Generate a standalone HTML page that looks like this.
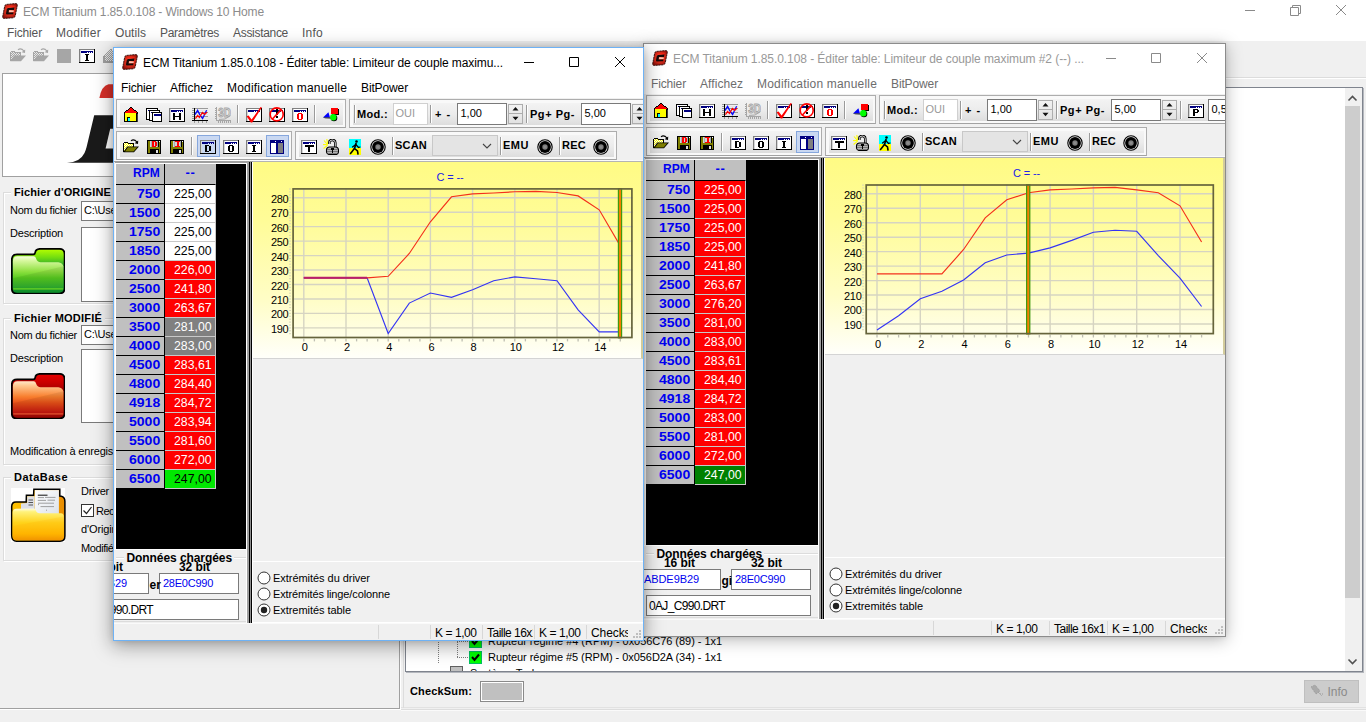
<!DOCTYPE html>
<html><head><meta charset="utf-8"><title>ECM Titanium</title>
<style>
html,body{margin:0;padding:0;}
body{width:1366px;height:722px;overflow:hidden;background:#f0f0f0;position:relative;font-family:"Liberation Sans",sans-serif;font-size:11px;color:#000;}
div,span,svg{position:absolute;box-sizing:border-box;}
span{white-space:nowrap;}
.win{overflow:hidden;background:#f0f0f0;}
.edit{background:#fff;border:1px solid #7a7a7a;}
.tb{border:1px solid #adadad;border-bottom-color:#a2a2a2;background:#f9f9f9;}
.tb:before{content:"";position:absolute;left:3px;top:3px;right:2px;bottom:2px;background:linear-gradient(#f3f3f3,#ececec 50%,#dddddd);}
.sep{width:2px;border-left:1px solid #9a9a9a;border-right:1px solid #fff;}
.grp{border:1px solid #dcdcdc;box-shadow:inset 1px 1px 0 #fff, 1px 1px 0 #fff;}
.hl{background:#c9d8f2;border:1px solid #86a7dd;}
</style></head><body>
<div style="left:0px;top:0px;width:1366px;height:41px;background:#fff;"></div><svg style="left:2px;top:2.5px;" width="16" height="16" viewBox="0 0 16 16" shape-rendering="crispEdges"><g shape-rendering="auto"><defs><radialGradient id="ag" cx="0.5" cy="0.45" r="0.6"><stop offset="0" stop-color="#ff9070"/><stop offset="0.45" stop-color="#e8301c"/><stop offset="1" stop-color="#8a120c"/></radialGradient></defs><path d="M4.6,1.4 L13.6,0.6 Q15.8,0.6 15.3,2.6 L13.2,12.8 Q12.8,14.6 11,14.8 L2.4,15.4 Q0.2,15.5 0.7,13.4 L2.7,3.2 Q3.1,1.5 4.6,1.4 Z" fill="url(#ag)" stroke="#2a0806" stroke-width="0.9" stroke-dasharray="2.2 0.6"/><path d="M12.4,4.6 L6.2,4.9 Q4.9,5 4.7,6.2 L4,10.2 Q3.8,11.6 5.2,11.6 L11.2,11.3 L11.5,9.4 L6.6,9.6 L7,7.1 L12,6.9 Z" fill="#140a0a"/><path d="M7.3,7.6 L11.8,7.4 L11.6,8.9 L7.1,9.1 Z" fill="#ffd8c8" opacity="0.85"/><path d="M5.4,3.9 L12.6,3.5" stroke="#ff2010" stroke-width="0.8"/></g></svg><span style="left:23px;top:3.5px;font-size:12px;line-height:16px;color:#8c8c8c;letter-spacing:-0.141px;">ECM Titanium 1.85.0.108 - Windows 10 Home</span><svg style="left:1240px;top:0" width="126" height="22" viewBox="0 0 126 22" fill="none" stroke="#8a8a8a" stroke-width="1"><path d="M5 10.5 H15"/><path d="M50.5 7.5 H58.5 V15.5 H50.5 Z M52.5 7.5 V5.5 H60.5 V13.5 H58.5"/><path d="M96 5 L106 15 M106 5 L96 15"/></svg><span style="left:7px;top:24.5px;font-size:12px;line-height:16px;color:#555;letter-spacing:-0.144px;">Fichier</span><span style="left:56px;top:24.5px;font-size:12px;line-height:16px;color:#555;letter-spacing:0.290px;">Modifier</span><span style="left:115px;top:24.5px;font-size:12px;line-height:16px;color:#555;letter-spacing:0.054px;">Outils</span><span style="left:160px;top:24.5px;font-size:12px;line-height:16px;color:#555;letter-spacing:-0.302px;">Paramètres</span><span style="left:233px;top:24.5px;font-size:12px;line-height:16px;color:#555;letter-spacing:-0.303px;">Assistance</span><span style="left:302px;top:24.5px;font-size:12px;line-height:16px;color:#555;letter-spacing:0.246px;">Info</span><svg style="left:10px;top:48px;" width="16" height="16" viewBox="0 0 16 16" shape-rendering="crispEdges"><polygon points="0,4 1,3 4,3 5,4 11,4 11,8 1,13 0,13" fill="#a6a6a6"/><polygon points="1,4 4,4 5,5 10,5 10,8 1,12" fill="#a6a6a6"/><rect x="1" y="4" width="1" height="1" fill="#e8e8e8"/><rect x="3" y="4" width="1" height="1" fill="#e8e8e8"/><rect x="2" y="5" width="1" height="1" fill="#e8e8e8"/><rect x="4" y="5" width="1" height="1" fill="#e8e8e8"/><rect x="6" y="5" width="1" height="1" fill="#e8e8e8"/><rect x="8" y="5" width="1" height="1" fill="#e8e8e8"/><rect x="1" y="6" width="1" height="1" fill="#e8e8e8"/><rect x="3" y="6" width="1" height="1" fill="#e8e8e8"/><rect x="5" y="6" width="1" height="1" fill="#e8e8e8"/><rect x="7" y="6" width="1" height="1" fill="#e8e8e8"/><rect x="9" y="6" width="1" height="1" fill="#e8e8e8"/><rect x="2" y="7" width="1" height="1" fill="#e8e8e8"/><rect x="4" y="7" width="1" height="1" fill="#e8e8e8"/><rect x="6" y="7" width="1" height="1" fill="#e8e8e8"/><rect x="8" y="7" width="1" height="1" fill="#e8e8e8"/><rect x="1" y="8" width="1" height="1" fill="#e8e8e8"/><rect x="3" y="8" width="1" height="1" fill="#e8e8e8"/><rect x="5" y="8" width="1" height="1" fill="#e8e8e8"/><rect x="7" y="8" width="1" height="1" fill="#e8e8e8"/><rect x="2" y="9" width="1" height="1" fill="#e8e8e8"/><rect x="4" y="9" width="1" height="1" fill="#e8e8e8"/><rect x="1" y="10" width="1" height="1" fill="#e8e8e8"/><rect x="3" y="10" width="1" height="1" fill="#e8e8e8"/><rect x="2" y="11" width="1" height="1" fill="#e8e8e8"/><polygon shape-rendering="auto" points="0.3,13.2 4.2,7.4 16,7.4 11,13.2" fill="#a6a6a6"/><polygon shape-rendering="auto" points="2,12.4 4.9,8.3 14.2,8.3 10.6,12.4" fill="#a6a6a6"/><path shape-rendering="auto" d="M8,1.8 Q10.8,-0.6 14,3" fill="none" stroke="#a6a6a6" stroke-width="1.1"/><polygon points="15.2,1.4 15,5 11.6,4.2" fill="#a6a6a6" shape-rendering="auto"/></svg><svg style="left:33px;top:48px;" width="16" height="16" viewBox="0 0 16 16" shape-rendering="crispEdges"><polygon points="0,4 1,3 4,3 5,4 11,4 11,8 1,13 0,13" fill="#a6a6a6"/><polygon points="1,4 4,4 5,5 10,5 10,8 1,12" fill="#a6a6a6"/><rect x="1" y="4" width="1" height="1" fill="#e8e8e8"/><rect x="3" y="4" width="1" height="1" fill="#e8e8e8"/><rect x="2" y="5" width="1" height="1" fill="#e8e8e8"/><rect x="4" y="5" width="1" height="1" fill="#e8e8e8"/><rect x="6" y="5" width="1" height="1" fill="#e8e8e8"/><rect x="8" y="5" width="1" height="1" fill="#e8e8e8"/><rect x="1" y="6" width="1" height="1" fill="#e8e8e8"/><rect x="3" y="6" width="1" height="1" fill="#e8e8e8"/><rect x="5" y="6" width="1" height="1" fill="#e8e8e8"/><rect x="7" y="6" width="1" height="1" fill="#e8e8e8"/><rect x="9" y="6" width="1" height="1" fill="#e8e8e8"/><rect x="2" y="7" width="1" height="1" fill="#e8e8e8"/><rect x="4" y="7" width="1" height="1" fill="#e8e8e8"/><rect x="6" y="7" width="1" height="1" fill="#e8e8e8"/><rect x="8" y="7" width="1" height="1" fill="#e8e8e8"/><rect x="1" y="8" width="1" height="1" fill="#e8e8e8"/><rect x="3" y="8" width="1" height="1" fill="#e8e8e8"/><rect x="5" y="8" width="1" height="1" fill="#e8e8e8"/><rect x="7" y="8" width="1" height="1" fill="#e8e8e8"/><rect x="2" y="9" width="1" height="1" fill="#e8e8e8"/><rect x="4" y="9" width="1" height="1" fill="#e8e8e8"/><rect x="1" y="10" width="1" height="1" fill="#e8e8e8"/><rect x="3" y="10" width="1" height="1" fill="#e8e8e8"/><rect x="2" y="11" width="1" height="1" fill="#e8e8e8"/><polygon shape-rendering="auto" points="0.3,13.2 4.2,7.4 16,7.4 11,13.2" fill="#a6a6a6"/><polygon shape-rendering="auto" points="2,12.4 4.9,8.3 14.2,8.3 10.6,12.4" fill="#a6a6a6"/><path shape-rendering="auto" d="M8,1.8 Q10.8,-0.6 14,3" fill="none" stroke="#a6a6a6" stroke-width="1.1"/><polygon points="15.2,1.4 15,5 11.6,4.2" fill="#a6a6a6" shape-rendering="auto"/></svg><div style="left:57px;top:49px;width:14px;height:14px;background:#a6a6a6;"></div><svg style="left:79px;top:48px;" width="16" height="16" viewBox="0 0 16 16" shape-rendering="crispEdges"><rect x="0" y="1" width="16" height="14" fill="#808080"/><rect x="15" y="1" width="1" height="14" fill="#000"/><rect x="0" y="14" width="16" height="1" fill="#000"/><rect x="1" y="2" width="14" height="12" fill="#fff"/><rect x="1" y="2" width="1" height="12" fill="#d8d8d8"/><rect x="2" y="3" width="12" height="2" fill="#000080"/><rect x="8" y="4" width="1" height="1" fill="#fff"/><rect x="10" y="4" width="1" height="1" fill="#fff"/><rect x="12" y="4" width="1" height="1" fill="#fff"/><rect x="6" y="6" width="4" height="1" fill="#000"/><rect x="7" y="6" width="2" height="7" fill="#000"/><rect x="6" y="12" width="4" height="1" fill="#000"/></svg><svg style="left:102px;top:48px;" width="16" height="16" viewBox="0 0 16 16" shape-rendering="crispEdges"><polygon points="2,8 9,0 16,8" fill="#a0a0a0"/><rect x="1" y="8" width="15" height="7" fill="#a0a0a0"/><rect x="8" y="2" width="1" height="1" fill="#e8e8e8"/><rect x="10" y="2" width="1" height="1" fill="#e8e8e8"/><rect x="7" y="3" width="1" height="1" fill="#e8e8e8"/><rect x="9" y="3" width="1" height="1" fill="#e8e8e8"/><rect x="11" y="3" width="1" height="1" fill="#e8e8e8"/><rect x="6" y="4" width="1" height="1" fill="#e8e8e8"/><rect x="8" y="4" width="1" height="1" fill="#e8e8e8"/><rect x="10" y="4" width="1" height="1" fill="#e8e8e8"/><rect x="12" y="4" width="1" height="1" fill="#e8e8e8"/><rect x="5" y="5" width="1" height="1" fill="#e8e8e8"/><rect x="7" y="5" width="1" height="1" fill="#e8e8e8"/><rect x="9" y="5" width="1" height="1" fill="#e8e8e8"/><rect x="11" y="5" width="1" height="1" fill="#e8e8e8"/><rect x="13" y="5" width="1" height="1" fill="#e8e8e8"/><rect x="4" y="6" width="1" height="1" fill="#e8e8e8"/><rect x="6" y="6" width="1" height="1" fill="#e8e8e8"/><rect x="8" y="6" width="1" height="1" fill="#e8e8e8"/><rect x="10" y="6" width="1" height="1" fill="#e8e8e8"/><rect x="12" y="6" width="1" height="1" fill="#e8e8e8"/><rect x="14" y="6" width="1" height="1" fill="#e8e8e8"/><rect x="3" y="7" width="1" height="1" fill="#e8e8e8"/><rect x="5" y="7" width="1" height="1" fill="#e8e8e8"/><rect x="7" y="7" width="1" height="1" fill="#e8e8e8"/><rect x="9" y="7" width="1" height="1" fill="#e8e8e8"/><rect x="11" y="7" width="1" height="1" fill="#e8e8e8"/><rect x="13" y="7" width="1" height="1" fill="#e8e8e8"/><rect x="4" y="8" width="1" height="1" fill="#e8e8e8"/><rect x="6" y="8" width="1" height="1" fill="#e8e8e8"/><rect x="8" y="8" width="1" height="1" fill="#e8e8e8"/><rect x="10" y="8" width="1" height="1" fill="#e8e8e8"/><rect x="12" y="8" width="1" height="1" fill="#e8e8e8"/><rect x="14" y="8" width="1" height="1" fill="#e8e8e8"/><rect x="3" y="9" width="1" height="1" fill="#e8e8e8"/><rect x="5" y="9" width="1" height="1" fill="#e8e8e8"/><rect x="7" y="9" width="1" height="1" fill="#e8e8e8"/><rect x="9" y="9" width="1" height="1" fill="#e8e8e8"/><rect x="11" y="9" width="1" height="1" fill="#e8e8e8"/><rect x="13" y="9" width="1" height="1" fill="#e8e8e8"/><rect x="4" y="10" width="1" height="1" fill="#e8e8e8"/><rect x="6" y="10" width="1" height="1" fill="#e8e8e8"/><rect x="8" y="10" width="1" height="1" fill="#e8e8e8"/><rect x="10" y="10" width="1" height="1" fill="#e8e8e8"/><rect x="12" y="10" width="1" height="1" fill="#e8e8e8"/><rect x="14" y="10" width="1" height="1" fill="#e8e8e8"/><rect x="3" y="11" width="1" height="1" fill="#e8e8e8"/><rect x="5" y="11" width="1" height="1" fill="#e8e8e8"/><rect x="7" y="11" width="1" height="1" fill="#e8e8e8"/><rect x="9" y="11" width="1" height="1" fill="#e8e8e8"/><rect x="11" y="11" width="1" height="1" fill="#e8e8e8"/><rect x="13" y="11" width="1" height="1" fill="#e8e8e8"/><rect x="4" y="12" width="1" height="1" fill="#e8e8e8"/><rect x="6" y="12" width="1" height="1" fill="#e8e8e8"/><rect x="8" y="12" width="1" height="1" fill="#e8e8e8"/><rect x="10" y="12" width="1" height="1" fill="#e8e8e8"/><rect x="12" y="12" width="1" height="1" fill="#e8e8e8"/><rect x="14" y="12" width="1" height="1" fill="#e8e8e8"/></svg><div style="left:2px;top:73px;width:420px;height:104px;background:#fff;border:1px solid #a0a0a0;border-right:none;"></div><svg style="left:60px;top:76px" width="60" height="100" viewBox="60 76 60 100"><path d="M99.4 98 Q101.5 86 108.5 84.3 L116 84.3 L116 98 Z" fill="#d8302a"/><path d="M67 162.7 Q80 162.4 84.5 153 Q86 149.5 86.6 147 L94.2 115.3 L116 115.3 L116 162.7 Z" fill="#1a1a1a"/><path d="M110.2 128.7 L116 128.7 L116 148.6 L105.6 148.6 Z" fill="#fff"/></svg><div class="grp" style="left:3px;top:192px;width:200px;height:112px;"></div><div style="left:11px;top:186px;width:103px;height:13px;background:#f0f0f0;"></div><span style="left:14px;top:185.0px;font-size:11px;line-height:15px;color:#000;letter-spacing:0.123px;font-weight:bold;">Fichier d&#x27;ORIGINE</span><span style="left:10px;top:203.0px;font-size:11px;line-height:15px;color:#000;letter-spacing:-0.280px;">Nom du fichier</span><div class="edit" style="left:81px;top:201px;width:120px;height:20px;"><span style="left:2px;top:1.0px;font-size:11px;line-height:15px;color:#000;letter-spacing:-0.2px;">C:\Users\</span></div><span style="left:10px;top:226.0px;font-size:11px;line-height:15px;color:#000;letter-spacing:-0.184px;">Description</span><div class="edit" style="left:81px;top:227px;width:120px;height:75px;"></div><div class="grp" style="left:3px;top:318px;width:200px;height:147px;"></div><div style="left:11px;top:312px;width:94px;height:13px;background:#f0f0f0;"></div><span style="left:14px;top:311.0px;font-size:11px;line-height:15px;color:#000;letter-spacing:0.203px;font-weight:bold;">Fichier MODIFIÉ</span><span style="left:10px;top:328.0px;font-size:11px;line-height:15px;color:#000;letter-spacing:-0.280px;">Nom du fichier</span><div class="edit" style="left:81px;top:325px;width:120px;height:20px;"><span style="left:2px;top:1.0px;font-size:11px;line-height:15px;color:#000;letter-spacing:-0.2px;">C:\Users\</span></div><span style="left:10px;top:351.0px;font-size:11px;line-height:15px;color:#000;letter-spacing:-0.184px;">Description</span><div class="edit" style="left:81px;top:349px;width:120px;height:74px;"></div><span style="left:10px;top:444.0px;font-size:11px;line-height:15px;color:#000;letter-spacing:-0.173px;">Modification à enregistrer</span><div class="grp" style="left:3px;top:477px;width:200px;height:84px;"></div><div style="left:11px;top:471px;width:60px;height:13px;background:#f0f0f0;"></div><span style="left:14px;top:470.0px;font-size:11px;line-height:15px;color:#000;letter-spacing:0.483px;font-weight:bold;">DataBase</span><span style="left:81px;top:484.0px;font-size:11px;line-height:15px;color:#000;letter-spacing:-0.222px;">Driver</span><div style="left:81px;top:504px;width:13px;height:13px;background:#fff;border:1px solid #333;"><svg style="left:0;top:0" width="11" height="11" viewBox="0 0 11 11"><path d="M1.5 5.5 L4.5 8.5 L9.5 2" fill="none" stroke="#222" stroke-width="1.2"/></svg></div><span style="left:96px;top:504.0px;font-size:11px;line-height:15px;color:#000;letter-spacing:-0.486px;">Rechercher</span><span style="left:81px;top:522.0px;font-size:11px;line-height:15px;color:#000;letter-spacing:-0.131px;">d&#x27;Origine</span><span style="left:81px;top:541.0px;font-size:11px;line-height:15px;color:#000;letter-spacing:-0.423px;">Modifié</span><svg style="left:11px;top:247.5px" width="54.4" height="46.4" viewBox="0 0 54 46"><defs><linearGradient id="fga" x1="0" y1="0" x2="0" y2="1"><stop offset="0" stop-color="#f6ffe0"/><stop offset="0.12" stop-color="#d8f8a0"/><stop offset="0.42" stop-color="#8ee040"/><stop offset="0.6" stop-color="#58cc20"/><stop offset="0.86" stop-color="#30b030"/><stop offset="0.9" stop-color="#18a030"/><stop offset="1" stop-color="#10982c"/></linearGradient><linearGradient id="fgb" x1="0" y1="0" x2="0" y2="1"><stop offset="0" stop-color="#b8ff00"/><stop offset="0.2" stop-color="#70dc10"/><stop offset="0.45" stop-color="#109040"/><stop offset="1" stop-color="#0c8030"/></linearGradient></defs><path d="M24 4.5 Q24.5 0.8 29 0.8 L48 0.8 Q53.2 0.8 53.2 6 L53.2 40 Q53.2 45.2 48 45.2 L6 45.2 Q0.8 45.2 0.8 40 L0.8 11.5 Q0.8 6.3 6 6.3 L22 6.3 Q23.8 6.3 24 4.5 Z" fill="url(#fgb)" stroke="#000" stroke-width="1.7"/><path d="M1.9 13 Q1.9 8.2 6.5 8.2 L22.5 8.2 Q24.3 8.2 25 10.6 Q26 14 29.5 14 L47 14 Q51 14.4 52.1 18 L52.1 39.5 Q52.1 44.1 47.5 44.1 L6.5 44.1 Q1.9 44.1 1.9 39.5 Z" fill="url(#fga)"/><path d="M1.9 30 L52.1 18 L52.1 39.5 Q52.1 44.1 47.5 44.1 L6.5 44.1 Q1.9 44.1 1.9 39.5 Z" fill="#000" opacity="0.07"/><path d="M2.2 40.6 L51.8 40.6" stroke="#90f020" stroke-width="0.9"/></svg><svg style="left:11px;top:372.5px" width="54.4" height="46.4" viewBox="0 0 54 46"><defs><linearGradient id="fra" x1="0" y1="0" x2="0" y2="1"><stop offset="0" stop-color="#ffe8c8"/><stop offset="0.12" stop-color="#ffc890"/><stop offset="0.42" stop-color="#f88030"/><stop offset="0.6" stop-color="#e85018"/><stop offset="0.86" stop-color="#c81810"/><stop offset="0.9" stop-color="#b00c08"/><stop offset="1" stop-color="#a00806"/></linearGradient><linearGradient id="frb" x1="0" y1="0" x2="0" y2="1"><stop offset="0" stop-color="#e80000"/><stop offset="0.2" stop-color="#c80000"/><stop offset="0.45" stop-color="#900000"/><stop offset="1" stop-color="#800000"/></linearGradient></defs><path d="M24 4.5 Q24.5 0.8 29 0.8 L48 0.8 Q53.2 0.8 53.2 6 L53.2 40 Q53.2 45.2 48 45.2 L6 45.2 Q0.8 45.2 0.8 40 L0.8 11.5 Q0.8 6.3 6 6.3 L22 6.3 Q23.8 6.3 24 4.5 Z" fill="url(#frb)" stroke="#000" stroke-width="1.7"/><path d="M1.9 13 Q1.9 8.2 6.5 8.2 L22.5 8.2 Q24.3 8.2 25 10.6 Q26 14 29.5 14 L47 14 Q51 14.4 52.1 18 L52.1 39.5 Q52.1 44.1 47.5 44.1 L6.5 44.1 Q1.9 44.1 1.9 39.5 Z" fill="url(#fra)"/><path d="M1.9 30 L52.1 18 L52.1 39.5 Q52.1 44.1 47.5 44.1 L6.5 44.1 Q1.9 44.1 1.9 39.5 Z" fill="#000" opacity="0.07"/><path d="M2.2 40.6 L51.8 40.6" stroke="#ff7040" stroke-width="0.9"/></svg><div style="left:11px;top:488px;width:54px;height:54px;background:#fff;"></div><svg style="left:8px;top:484px" width="60" height="62" viewBox="8 484 60 62"><defs><linearGradient id="fya" x1="0" y1="0" x2="0" y2="1"><stop offset="0" stop-color="#fffde0"/><stop offset="0.1" stop-color="#fff27a"/><stop offset="0.45" stop-color="#ffd21a"/><stop offset="0.8" stop-color="#ffb800"/><stop offset="1" stop-color="#f09400"/></linearGradient><linearGradient id="fyb" x1="0" y1="0" x2="1" y2="0"><stop offset="0" stop-color="#ffc400"/><stop offset="1" stop-color="#e88c00"/></linearGradient><linearGradient id="fyp" x1="0" y1="0" x2="1" y2="1"><stop offset="0" stop-color="#ffffff"/><stop offset="1" stop-color="#dde2ea"/></linearGradient></defs><path d="M11.7 535.5 L11.7 506.5 Q11.7 501.9 16 501.9 L26.2 501.9 L26.4 495.3 L33.6 495.3 L33.9 489.2 L59.8 489.2 L59.8 496 L61.3 496.2 Q64.9 497 64.9 501.5 L64.9 536 Q64.9 541.2 60 541.2 L16.5 541.2 Q11.7 541.2 11.7 535.5 Z" fill="url(#fyb)" stroke="#000" stroke-width="1.5"/><path d="M27.2 496.2 L34.6 496.2 L34.6 510 L21 510 L21 503.5 L27.2 503 Z" fill="#dcdfe6"/><path d="M28.5 500 H33 M28.5 502.5 H33 M28.5 505 H33" stroke="#555" stroke-width="1"/><path d="M34.8 490.1 L58.9 490.1 L58.9 514 L34.8 514 Z" fill="url(#fyp)"/><path d="M37.8 495.2 H47.5" stroke="#222" stroke-width="1.1"/><path d="M37.8 497.6 H44 M45 497.4 H55.5 M37.8 500.4 H46 M47.5 500.2 H55 M38 503.2 H54 M38 504.6 H39 M40.5 506.6 H54 M46 510.2 H47" stroke="#8a8a8a" stroke-width="0.8"/><path d="M12.6 512.8 Q12.6 508.8 16.5 508.8 L33.8 508.6 Q35.6 508.8 36 510.6 Q36.6 513.2 39.5 513.2 L61 513.2 Q63.9 513.6 63.9 516.5 L63.9 536 Q63.9 540.2 60 540.2 L16.5 540.2 Q12.6 540.2 12.6 536 Z" fill="url(#fya)"/><path d="M12.6 526 L63.9 516.5 L63.9 536 Q63.9 540.2 60 540.2 L16.5 540.2 Q12.6 540.2 12.6 536 Z" fill="#ff9c00" opacity="0.13"/></svg><div style="left:399px;top:77px;width:967px;height:1px;background:#dcdcdc;"></div><div style="left:399px;top:78px;width:967px;height:1px;background:#fff;"></div><div style="left:405px;top:87px;width:958px;height:585px;background:#fff;border:1px solid #7f848e;box-shadow:1px 1px 0 #b4b7bd;"></div><div style="left:1345px;top:88px;width:17px;height:583px;background:#f0f0f0;"></div><div style="left:1345px;top:106px;width:15px;height:492px;background:#cdcdcd;"></div><svg style="left:1344px;top:89.5px" width="17" height="17" viewBox="0 0 17 17"><path d="M4.5 10.5 L8.5 6.5 L12.5 10.5" fill="none" stroke="#505050" stroke-width="1.6"/></svg><svg style="left:1344px;top:653px" width="17" height="17" viewBox="0 0 17 17"><path d="M4.5 6.5 L8.5 10.5 L12.5 6.5" fill="none" stroke="#505050" stroke-width="1.6"/></svg><div style="left:438px;top:640px;width:1px;height:24px;background-image:repeating-linear-gradient(to bottom,#808080 0 1px,transparent 1px 2px);"></div><div style="left:457px;top:640px;width:1px;height:17px;background-image:repeating-linear-gradient(to bottom,#808080 0 1px,transparent 1px 2px);"></div><div style="left:457px;top:641px;width:11px;height:1px;background-image:repeating-linear-gradient(to right,#808080 0 1px,transparent 1px 2px);"></div><div style="left:457px;top:657px;width:11px;height:1px;background-image:repeating-linear-gradient(to right,#808080 0 1px,transparent 1px 2px);"></div><div style="left:469px;top:634.5px;width:13px;height:13px;background:#0f0;border:1px solid #00c060;"><svg style="left:0;top:0" width="11" height="11" viewBox="0 0 11 11"><path d="M2 5 L4.5 8 L9 2.5" fill="none" stroke="#000" stroke-width="2"/></svg></div><div style="left:469px;top:650.5px;width:13px;height:13px;background:#0f0;border:1px solid #00c060;"><svg style="left:0;top:0" width="11" height="11" viewBox="0 0 11 11"><path d="M2 5 L4.5 8 L9 2.5" fill="none" stroke="#000" stroke-width="2"/></svg></div><span style="left:488px;top:634.0px;font-size:11px;line-height:15px;color:#000;letter-spacing:-0.044px;">Rupteur régime #4 (RPM) - 0x056C76 (89) - 1x1</span><span style="left:488px;top:650.0px;font-size:11px;line-height:15px;color:#000;letter-spacing:-0.058px;">Rupteur régime #5 (RPM) - 0x056D2A (34) - 1x1</span><div style="left:450px;top:666px;width:13px;height:5px;background:#c0c0c0;border:1px solid #606060;border-bottom:none;"></div><div style="left:470px;top:666px;width:100px;height:5px;overflow:hidden;"><span style="left:0px;top:-0.5px;font-size:11px;line-height:15px;color:#000;">Système Turbo</span></div><span style="left:410px;top:684.0px;font-size:11px;line-height:15px;color:#000;letter-spacing:0.165px;font-weight:bold;">CheckSum:</span><div style="left:480px;top:681px;width:44px;height:21px;background:#c0c0c0;border:1px solid #8a8a8a;box-shadow:inset 0 0 0 1px #fff;"></div><div style="left:1304px;top:680px;width:55px;height:23px;background:#cccccc;border:1px solid #bfbfbf;"></div><span style="left:1327.5px;top:684.0px;font-size:12px;line-height:16px;color:#8a8a8a;letter-spacing:-0.004px;">Info</span><svg style="left:1308px;top:683px" width="18" height="16" viewBox="0 0 18 16"><path d="M3 4 L7 2 L12 8 L8 11 Z M10 9 L14 13 M12 11 L16 11" fill="#aaa" stroke="#999" stroke-width="1" stroke-dasharray="1 1"/></svg><div style="left:401px;top:707px;width:965px;height:1px;background:#e2e2e2;"></div><div style="left:401px;top:709px;width:965px;height:1px;background:#dddddd;"></div><div style="left:401px;top:710px;width:965px;height:1px;background:#fafafa;"></div><div style="left:0px;top:708px;width:400px;height:1px;background:#a0a0a0;"></div><div style="left:0px;top:709px;width:401px;height:1px;background:#fff;"></div><div style="left:399px;top:78px;width:1px;height:631px;background:#a0a0a0;"></div><div style="left:400px;top:78px;width:1px;height:631px;background:#fff;"></div><div style="left:403px;top:82px;width:1px;height:626px;background:#dcdcdc;"></div><div style="left:643px;top:43px;width:583px;height:594px;box-shadow:0 3px 16px 0 rgba(0,0,0,0.28), 0 0 5px rgba(0,0,0,0.10);"></div><div class="win" style="left:643px;top:43px;width:583px;height:594px;border:1px solid #8c8c8c;"><div style="left:-114px;top:-48px;width:1400px;height:800px;"><div style="left:113px;top:47px;width:582px;height:51px;background:#fff;"></div><svg style="left:122px;top:54px;" width="16" height="16" viewBox="0 0 16 16" shape-rendering="crispEdges"><g shape-rendering="auto"><defs><radialGradient id="ag643" cx="0.5" cy="0.45" r="0.6"><stop offset="0" stop-color="#ff9070"/><stop offset="0.45" stop-color="#e8301c"/><stop offset="1" stop-color="#8a120c"/></radialGradient></defs><path d="M4.6,1.4 L13.6,0.6 Q15.8,0.6 15.3,2.6 L13.2,12.8 Q12.8,14.6 11,14.8 L2.4,15.4 Q0.2,15.5 0.7,13.4 L2.7,3.2 Q3.1,1.5 4.6,1.4 Z" fill="url(#ag643)" stroke="#2a0806" stroke-width="0.9" stroke-dasharray="2.2 0.6"/><path d="M12.4,4.6 L6.2,4.9 Q4.9,5 4.7,6.2 L4,10.2 Q3.8,11.6 5.2,11.6 L11.2,11.3 L11.5,9.4 L6.6,9.6 L7,7.1 L12,6.9 Z" fill="#140a0a"/><path d="M7.3,7.6 L11.8,7.4 L11.6,8.9 L7.1,9.1 Z" fill="#ffd8c8" opacity="0.85"/><path d="M5.4,3.9 L12.6,3.5" stroke="#ff2010" stroke-width="0.8"/></g></svg><span style="left:143px;top:54.5px;font-size:12px;line-height:16px;color:#999;letter-spacing:-0.066px;">ECM Titanium 1.85.0.108 - Éditer table: Limiteur de couple maximum #2 (--) ...</span><svg style="left:576px;top:47px" width="119" height="30" viewBox="0 0 119 30" fill="none" stroke="#8a8a8a" stroke-width="1"><path d="M0 15.5 H10"/><path d="M45.5 10.5 H54.5 V19.5 H45.5 Z"/><path d="M91 10 L101 20 M101 10 L91 20"/></svg><span style="left:121px;top:79.5px;font-size:12px;line-height:16px;color:#6d6d6d;letter-spacing:-0.144px;">Fichier</span><span style="left:170px;top:79.5px;font-size:12px;line-height:16px;color:#6d6d6d;letter-spacing:0.066px;">Affichez</span><span style="left:227px;top:79.5px;font-size:12px;line-height:16px;color:#6d6d6d;letter-spacing:0.188px;">Modification manuelle</span><span style="left:361px;top:79.5px;font-size:12px;line-height:16px;color:#6d6d6d;letter-spacing:-0.127px;">BitPower</span><div class="tb" style="left:116px;top:99px;width:230px;height:29px;"></div><div class="tb" style="left:349px;top:99px;width:350px;height:29px;"></div><div class="tb" style="left:116px;top:131px;width:176px;height:29px;"></div><div class="tb" style="left:295px;top:131px;width:322px;height:29px;"></div><svg style="left:123px;top:107px;" width="16" height="16" viewBox="0 0 16 16" shape-rendering="crispEdges"><polygon points="8,0 16,6 0,6" fill="#000"/><polygon points="8,1 14,5.5 2,5.5" fill="#f00"/><rect x="1" y="6" width="14" height="9" fill="#000"/><rect x="2" y="6" width="11" height="8" fill="#ff0"/><rect x="4" y="10" width="3" height="4" fill="#000"/><rect x="5" y="11" width="2" height="3" fill="#0ff"/><rect x="14" y="7" width="1" height="8" fill="#404040"/></svg><svg style="left:146px;top:107px;" width="16" height="16" viewBox="0 0 16 16" shape-rendering="crispEdges"><rect x="0" y="1" width="12" height="12" fill="#000"/><rect x="1" y="2" width="10" height="10" fill="#fff"/><rect x="2" y="3" width="9" height="1" fill="#000080"/><rect x="3" y="3" width="11" height="11" fill="#000"/><rect x="4" y="4" width="9" height="9" fill="#fff"/><rect x="5" y="5" width="8" height="1" fill="#000080"/><rect x="6" y="5" width="10" height="10" fill="#000"/><rect x="7" y="6" width="8" height="8" fill="#fff"/><rect x="8" y="7" width="7" height="2" fill="#000080"/></svg><svg style="left:169px;top:107px;" width="16" height="16" viewBox="0 0 16 16" shape-rendering="crispEdges"><rect x="0" y="1" width="16" height="14" fill="#808080"/><rect x="15" y="1" width="1" height="14" fill="#000"/><rect x="0" y="14" width="16" height="1" fill="#000"/><rect x="1" y="2" width="14" height="12" fill="#fff"/><rect x="1" y="2" width="1" height="12" fill="#d8d8d8"/><rect x="2" y="3" width="12" height="2" fill="#000080"/><rect x="8" y="4" width="1" height="1" fill="#fff"/><rect x="10" y="4" width="1" height="1" fill="#fff"/><rect x="12" y="4" width="1" height="1" fill="#fff"/><rect x="4" y="6" width="2" height="7" fill="#000"/><rect x="10" y="6" width="2" height="7" fill="#000"/><rect x="6" y="9" width="4" height="1" fill="#000"/></svg><svg style="left:192px;top:107px;" width="16" height="16" viewBox="0 0 16 16" shape-rendering="crispEdges"><rect x="0" y="1" width="16" height="1" fill="#9a9a9a"/><rect x="0" y="5" width="16" height="1" fill="#9a9a9a"/><rect x="0" y="9" width="16" height="1" fill="#9a9a9a"/><rect x="0" y="3" width="2" height="1" fill="#9a9a9a"/><rect x="3" y="3" width="13" height="1" fill="#e4e4e4"/><rect x="0" y="7" width="2" height="1" fill="#9a9a9a"/><rect x="3" y="7" width="13" height="1" fill="#e4e4e4"/><rect x="0" y="11" width="2" height="1" fill="#9a9a9a"/><rect x="3" y="11" width="13" height="1" fill="#e4e4e4"/><rect x="2" y="1" width="1" height="13" fill="#000"/><rect x="0" y="13" width="16" height="1" fill="#000"/><rect x="2" y="14" width="1" height="2" fill="#9a9a9a"/><rect x="6" y="14" width="1" height="2" fill="#9a9a9a"/><rect x="10" y="14" width="1" height="2" fill="#9a9a9a"/><rect x="14" y="14" width="1" height="2" fill="#9a9a9a"/><polyline shape-rendering="auto" points="3,7.6 5.6,3.4 7.6,7.4 10.6,11.5 14.6,3.2" fill="none" stroke="#00f" stroke-width="1.25"/><polyline shape-rendering="auto" points="3.4,11.6 5.6,8.4 7.4,10.5 10.4,5.4 12.5,7.4 15,5.2" fill="none" stroke="#f00" stroke-width="1.25"/></svg><svg style="left:215px;top:107px;" width="16" height="16" viewBox="0 0 16 16" shape-rendering="crispEdges"><rect x="1" y="0" width="1" height="14" fill="#a6a6a6"/><rect x="1" y="13" width="15" height="1" fill="#a6a6a6"/><rect x="0" y="1" width="1" height="1" fill="#a6a6a6"/><rect x="0" y="3" width="1" height="1" fill="#a6a6a6"/><rect x="0" y="5" width="1" height="1" fill="#a6a6a6"/><rect x="0" y="7" width="1" height="1" fill="#a6a6a6"/><rect x="0" y="9" width="1" height="1" fill="#a6a6a6"/><rect x="0" y="11" width="1" height="1" fill="#a6a6a6"/><rect x="3" y="14" width="1" height="2" fill="#a6a6a6"/><rect x="5" y="14" width="1" height="2" fill="#a6a6a6"/><rect x="7" y="14" width="1" height="2" fill="#a6a6a6"/><rect x="9" y="14" width="1" height="2" fill="#a6a6a6"/><rect x="11" y="14" width="1" height="2" fill="#a6a6a6"/><rect x="13" y="14" width="1" height="2" fill="#a6a6a6"/><rect x="15" y="14" width="1" height="2" fill="#a6a6a6"/><text shape-rendering="auto" x="3.2" y="10.3" font-family="Liberation Sans" font-size="12.5" font-weight="bold" fill="#e8e8e8" stroke="#a6a6a6" stroke-width="0.95" textLength="12.6" lengthAdjust="spacingAndGlyphs">3D</text><polyline shape-rendering="auto" points="4,12.4 10,12 15.5,8.6" fill="none" stroke="#a6a6a6" stroke-width="1"/></svg><div class="sep" style="left:237px;top:105px;width:2px;height:18px;"></div><svg style="left:246px;top:107px;" width="16" height="16" viewBox="0 0 16 16" shape-rendering="crispEdges"><rect x="0" y="1" width="16" height="14" fill="#808080"/><rect x="15" y="1" width="1" height="14" fill="#000"/><rect x="0" y="14" width="16" height="1" fill="#000"/><rect x="1" y="2" width="14" height="12" fill="#fff"/><rect x="1" y="2" width="1" height="12" fill="#d8d8d8"/><rect x="2" y="3" width="12" height="2" fill="#000080"/><rect x="8" y="4" width="1" height="1" fill="#fff"/><rect x="10" y="4" width="1" height="1" fill="#fff"/><rect x="12" y="4" width="1" height="1" fill="#fff"/><polygon shape-rendering="auto" points="0.6,9.2 2.6,8.4 5.6,12.6 14.6,0 15.9,0.6 6.2,15.6 4.8,15.6" fill="#f00"/></svg><svg style="left:269px;top:107px;" width="16" height="16" viewBox="0 0 16 16" shape-rendering="crispEdges"><rect x="0" y="1" width="16" height="14" fill="#808080"/><rect x="15" y="1" width="1" height="14" fill="#000"/><rect x="0" y="14" width="16" height="1" fill="#000"/><rect x="1" y="2" width="14" height="12" fill="#fff"/><rect x="1" y="2" width="1" height="12" fill="#d8d8d8"/><rect x="2" y="3" width="12" height="2" fill="#000080"/><rect x="8" y="4" width="1" height="1" fill="#fff"/><rect x="10" y="4" width="1" height="1" fill="#fff"/><rect x="12" y="4" width="1" height="1" fill="#fff"/><rect x="7" y="2" width="2" height="6" fill="#000"/><rect x="7" y="9" width="2" height="2" fill="#000"/><circle shape-rendering="auto" cx="7.7" cy="7.4" r="6.5" fill="none" stroke="#f00" stroke-width="1.6"/><line shape-rendering="auto" x1="3.2" y1="12.2" x2="12.2" y2="2.6" stroke="#f00" stroke-width="1.6"/></svg><svg style="left:292px;top:107px;" width="16" height="16" viewBox="0 0 16 16" shape-rendering="crispEdges"><rect x="0" y="1" width="16" height="14" fill="#808080"/><rect x="15" y="1" width="1" height="14" fill="#000"/><rect x="0" y="14" width="16" height="1" fill="#000"/><rect x="1" y="2" width="14" height="12" fill="#fff"/><rect x="1" y="2" width="1" height="12" fill="#d8d8d8"/><rect x="2" y="3" width="12" height="2" fill="#000080"/><rect x="8" y="4" width="1" height="1" fill="#fff"/><rect x="10" y="4" width="1" height="1" fill="#fff"/><rect x="12" y="4" width="1" height="1" fill="#fff"/><rect x="5" y="7" width="2" height="5" fill="#f00"/><rect x="9" y="7" width="2" height="5" fill="#f00"/><rect x="6" y="6" width="4" height="1" fill="#f00"/><rect x="6" y="12" width="4" height="1" fill="#f00"/></svg><div class="sep" style="left:314px;top:105px;width:2px;height:18px;"></div><svg style="left:323px;top:107px;" width="16" height="16" viewBox="0 0 16 16" shape-rendering="crispEdges"><rect x="9" y="2" width="7" height="6" fill="#000"/><rect x="8" y="1" width="7" height="6" fill="#f00"/><polygon shape-rendering="auto" points="0,10.6 5.4,5.2 7,10.6" fill="#00f"/><polygon shape-rendering="auto" points="0,10.6 7,10.6 8,11.6 2,11.2" fill="#000"/><circle shape-rendering="auto" cx="11" cy="11" r="3.3" fill="#000"/><circle shape-rendering="auto" cx="10.3" cy="10.2" r="3.2" fill="#0f0"/></svg><div class="sep" style="left:354px;top:105px;width:2px;height:18px;"></div><span style="left:357px;top:106.5px;font-size:11px;line-height:15px;color:#000;letter-spacing:0.336px;font-weight:bold;">Mod.:</span><div class="edit" style="left:393px;top:103px;width:35px;height:22px;border-color:#d0d0d0;"><span style="left:1.5px;top:1.5px;font-size:11px;line-height:15px;color:#9a9a9a;">OUI</span></div><div class="sep" style="left:430px;top:105px;width:2px;height:18px;"></div><span style="left:435px;top:106.5px;font-size:11px;line-height:15px;color:#000;letter-spacing:0.952px;font-weight:bold;">+ -</span><div class="edit" style="left:457px;top:103px;width:50px;height:22px;"><span style="left:2.5px;top:1.5px;font-size:11px;line-height:15px;color:#000;">1,00</span></div><div style="left:508px;top:104px;width:15px;height:20px;background:linear-gradient(#f2f2f2,#e2e2e2);border:1px solid #adadad;"><div style="left:0;top:8px;width:13px;height:1px;background:#adadad"></div><svg style="left:-1px;top:-1px" width="15" height="20" viewBox="0 0 15 20"><path d="M4.5 6.5 L7.5 3 L10.5 6.5 Z M4.5 12.8 L7.5 16.3 L10.5 12.8 Z" fill="#111"/></svg></div><div class="sep" style="left:526px;top:105px;width:2px;height:18px;"></div><span style="left:530px;top:106.5px;font-size:11px;line-height:15px;color:#000;letter-spacing:0.535px;font-weight:bold;">Pg+ Pg-</span><div class="edit" style="left:581px;top:103px;width:50px;height:22px;"><span style="left:2.5px;top:1.5px;font-size:11px;line-height:15px;color:#000;">5,00</span></div><div style="left:632px;top:104px;width:15px;height:20px;background:linear-gradient(#f2f2f2,#e2e2e2);border:1px solid #adadad;"><div style="left:0;top:8px;width:13px;height:1px;background:#adadad"></div><svg style="left:-1px;top:-1px" width="15" height="20" viewBox="0 0 15 20"><path d="M4.5 6.5 L7.5 3 L10.5 6.5 Z M4.5 12.8 L7.5 16.3 L10.5 12.8 Z" fill="#111"/></svg></div><div class="sep" style="left:650px;top:105px;width:2px;height:18px;"></div><svg style="left:658px;top:107px;" width="16" height="16" viewBox="0 0 16 16" shape-rendering="crispEdges"><rect x="0" y="1" width="16" height="14" fill="#808080"/><rect x="15" y="1" width="1" height="14" fill="#000"/><rect x="0" y="14" width="16" height="1" fill="#000"/><rect x="1" y="2" width="14" height="12" fill="#fff"/><rect x="1" y="2" width="1" height="12" fill="#d8d8d8"/><rect x="2" y="3" width="12" height="2" fill="#000080"/><rect x="8" y="4" width="1" height="1" fill="#fff"/><rect x="10" y="4" width="1" height="1" fill="#fff"/><rect x="12" y="4" width="1" height="1" fill="#fff"/><rect x="5" y="6" width="2" height="7" fill="#000"/><rect x="7" y="6" width="3" height="1" fill="#000"/><rect x="9" y="7" width="2" height="2" fill="#000"/><rect x="7" y="9" width="3" height="1" fill="#000"/></svg><div class="edit" style="left:678px;top:103px;width:40px;height:22px;"><span style="left:2.5px;top:1.5px;font-size:11px;line-height:15px;color:#000;">0,50</span></div><svg style="left:123px;top:139px;" width="16" height="16" viewBox="0 0 16 16" shape-rendering="crispEdges"><polygon points="0,4 1,3 4,3 5,4 11,4 11,8 1,13 0,13" fill="#000"/><polygon points="1,4 4,4 5,5 10,5 10,8 1,12" fill="#ff0"/><rect x="1" y="4" width="1" height="1" fill="#fff"/><rect x="3" y="4" width="1" height="1" fill="#fff"/><rect x="2" y="5" width="1" height="1" fill="#fff"/><rect x="4" y="5" width="1" height="1" fill="#fff"/><rect x="6" y="5" width="1" height="1" fill="#fff"/><rect x="8" y="5" width="1" height="1" fill="#fff"/><rect x="1" y="6" width="1" height="1" fill="#fff"/><rect x="3" y="6" width="1" height="1" fill="#fff"/><rect x="5" y="6" width="1" height="1" fill="#fff"/><rect x="7" y="6" width="1" height="1" fill="#fff"/><rect x="9" y="6" width="1" height="1" fill="#fff"/><rect x="2" y="7" width="1" height="1" fill="#fff"/><rect x="4" y="7" width="1" height="1" fill="#fff"/><rect x="6" y="7" width="1" height="1" fill="#fff"/><rect x="8" y="7" width="1" height="1" fill="#fff"/><rect x="1" y="8" width="1" height="1" fill="#fff"/><rect x="3" y="8" width="1" height="1" fill="#fff"/><rect x="5" y="8" width="1" height="1" fill="#fff"/><rect x="7" y="8" width="1" height="1" fill="#fff"/><rect x="2" y="9" width="1" height="1" fill="#fff"/><rect x="4" y="9" width="1" height="1" fill="#fff"/><rect x="1" y="10" width="1" height="1" fill="#fff"/><rect x="3" y="10" width="1" height="1" fill="#fff"/><rect x="2" y="11" width="1" height="1" fill="#fff"/><polygon shape-rendering="auto" points="0.3,13.2 4.2,7.4 16,7.4 11,13.2" fill="#000"/><polygon shape-rendering="auto" points="2,12.4 4.9,8.3 14.2,8.3 10.6,12.4" fill="#808000"/><path shape-rendering="auto" d="M8,1.8 Q10.8,-0.6 14,3" fill="none" stroke="#000" stroke-width="1.1"/><polygon points="15.2,1.4 15,5 11.6,4.2" fill="#000" shape-rendering="auto"/></svg><svg style="left:146px;top:139px;" width="16" height="16" viewBox="0 0 16 16" shape-rendering="crispEdges"><rect x="1" y="1" width="14" height="14" fill="#000"/><rect x="2" y="2" width="12" height="12" fill="#808000"/><rect x="4" y="1" width="9" height="7" fill="#000"/><rect x="4" y="2" width="8" height="6" fill="#d0d8d8"/><rect x="5" y="2" width="1" height="6" fill="#a8b0b0"/><rect x="11" y="2" width="1" height="6" fill="#a8b0b0"/><rect x="13" y="2" width="1" height="1" fill="#fff"/><rect x="4" y="10" width="9" height="5" fill="#000"/><rect x="10" y="11" width="2" height="3" fill="#e0e0e0"/><rect x="6" y="2" width="2" height="6" fill="#f00"/><rect x="8" y="2" width="2" height="1" fill="#f00"/><rect x="8" y="7" width="2" height="1" fill="#f00"/><rect x="9" y="3" width="2" height="4" fill="#f00"/><rect x="8" y="3" width="1" height="4" fill="#d0d8d8"/></svg><svg style="left:169px;top:139px;" width="16" height="16" viewBox="0 0 16 16" shape-rendering="crispEdges"><rect x="1" y="1" width="14" height="14" fill="#000"/><rect x="2" y="2" width="12" height="12" fill="#808000"/><rect x="4" y="1" width="9" height="7" fill="#000"/><rect x="4" y="2" width="8" height="6" fill="#d0d8d8"/><rect x="5" y="2" width="1" height="6" fill="#a8b0b0"/><rect x="11" y="2" width="1" height="6" fill="#a8b0b0"/><rect x="13" y="2" width="1" height="1" fill="#fff"/><rect x="4" y="10" width="9" height="5" fill="#000"/><rect x="10" y="11" width="2" height="3" fill="#e0e0e0"/><rect x="6" y="2" width="5" height="1" fill="#f00"/><rect x="8" y="2" width="2" height="6" fill="#f00"/><rect x="6" y="7" width="5" height="1" fill="#f00"/></svg><div class="sep" style="left:191px;top:137px;width:2px;height:18px;"></div><div class="hl" style="left:266px;top:135px;width:23px;height:22px;"></div><svg style="left:200px;top:139px;" width="16" height="16" viewBox="0 0 16 16" shape-rendering="crispEdges"><rect x="0" y="1" width="16" height="14" fill="#808080"/><rect x="15" y="1" width="1" height="14" fill="#000"/><rect x="0" y="14" width="16" height="1" fill="#000"/><rect x="1" y="2" width="14" height="12" fill="#fff"/><rect x="1" y="2" width="1" height="12" fill="#d8d8d8"/><rect x="2" y="3" width="12" height="2" fill="#000080"/><rect x="8" y="4" width="1" height="1" fill="#fff"/><rect x="10" y="4" width="1" height="1" fill="#fff"/><rect x="12" y="4" width="1" height="1" fill="#fff"/><rect x="5" y="6" width="2" height="7" fill="#000"/><rect x="7" y="6" width="2" height="1" fill="#000"/><rect x="7" y="12" width="2" height="1" fill="#000"/><rect x="9" y="7" width="2" height="5" fill="#000"/></svg><svg style="left:223px;top:139px;" width="16" height="16" viewBox="0 0 16 16" shape-rendering="crispEdges"><rect x="0" y="1" width="16" height="14" fill="#808080"/><rect x="15" y="1" width="1" height="14" fill="#000"/><rect x="0" y="14" width="16" height="1" fill="#000"/><rect x="1" y="2" width="14" height="12" fill="#fff"/><rect x="1" y="2" width="1" height="12" fill="#d8d8d8"/><rect x="2" y="3" width="12" height="2" fill="#000080"/><rect x="8" y="4" width="1" height="1" fill="#fff"/><rect x="10" y="4" width="1" height="1" fill="#fff"/><rect x="12" y="4" width="1" height="1" fill="#fff"/><rect x="5" y="7" width="2" height="5" fill="#000"/><rect x="9" y="7" width="2" height="5" fill="#000"/><rect x="6" y="6" width="4" height="1" fill="#000"/><rect x="6" y="12" width="4" height="1" fill="#000"/></svg><svg style="left:246px;top:139px;" width="16" height="16" viewBox="0 0 16 16" shape-rendering="crispEdges"><rect x="0" y="1" width="16" height="14" fill="#808080"/><rect x="15" y="1" width="1" height="14" fill="#000"/><rect x="0" y="14" width="16" height="1" fill="#000"/><rect x="1" y="2" width="14" height="12" fill="#fff"/><rect x="1" y="2" width="1" height="12" fill="#d8d8d8"/><rect x="2" y="3" width="12" height="2" fill="#000080"/><rect x="8" y="4" width="1" height="1" fill="#fff"/><rect x="10" y="4" width="1" height="1" fill="#fff"/><rect x="12" y="4" width="1" height="1" fill="#fff"/><rect x="6" y="6" width="4" height="1" fill="#000"/><rect x="7" y="6" width="2" height="7" fill="#000"/><rect x="6" y="12" width="4" height="1" fill="#000"/></svg><svg style="left:269px;top:139px;" width="16" height="16" viewBox="0 0 16 16" shape-rendering="crispEdges"><rect x="1" y="1" width="14" height="14" fill="#000080"/><rect x="6" y="2" width="1" height="1" fill="#fff"/><rect x="12" y="2" width="1" height="1" fill="#fff"/><rect x="2" y="4" width="5" height="10" fill="#fff"/><rect x="9" y="4" width="5" height="10" fill="#808080"/><rect x="7" y="4" width="2" height="11" fill="#000080"/></svg><svg style="left:301px;top:139px;" width="16" height="16" viewBox="0 0 16 16" shape-rendering="crispEdges"><rect x="0" y="1" width="16" height="14" fill="#808080"/><rect x="15" y="1" width="1" height="14" fill="#000"/><rect x="0" y="14" width="16" height="1" fill="#000"/><rect x="1" y="2" width="14" height="12" fill="#fff"/><rect x="1" y="2" width="1" height="12" fill="#d8d8d8"/><rect x="2" y="3" width="12" height="2" fill="#000080"/><rect x="8" y="4" width="1" height="1" fill="#fff"/><rect x="10" y="4" width="1" height="1" fill="#fff"/><rect x="12" y="4" width="1" height="1" fill="#fff"/><rect x="4" y="6" width="9" height="2" fill="#000"/><rect x="7" y="6" width="2" height="7" fill="#000"/></svg><svg style="left:323px;top:139px;" width="16" height="16" viewBox="0 0 16 16" shape-rendering="crispEdges"><g shape-rendering="auto" stroke="#ff0" stroke-width="1.1"><line x1="1" y1="1.5" x2="4.5" y2="5.5"/><line x1="3.8" y1="0" x2="4.6" y2="5"/><line x1="0" y1="5.6" x2="4.6" y2="5.6"/><line x1="0.6" y1="9.5" x2="4.6" y2="6.2"/></g><path shape-rendering="auto" d="M6.3,5 V3.8 Q6.3,1 9.3,1 Q12.3,1 12.3,3.8 V8" fill="none" stroke="#000" stroke-width="2.6"/><path shape-rendering="auto" d="M6.3,5 V3.8 Q6.3,1 9.3,1 Q12.3,1 12.3,3.8 V8" fill="none" stroke="#e8e8e8" stroke-width="0.9"/><rect shape-rendering="auto" x="3.5" y="8" width="12" height="7.6" rx="3.2" fill="#b4b4b4" stroke="#000" stroke-width="1.1"/><rect x="4" y="10" width="11" height="1" fill="#787878"/><rect x="4" y="12" width="11" height="1" fill="#787878"/><rect x="5" y="14" width="9" height="1" fill="#787878"/><rect x="8" y="9" width="3" height="2" fill="#000"/><rect x="9" y="11" width="1" height="3" fill="#000"/></svg><svg style="left:347px;top:139px;" width="16" height="16" viewBox="0 0 16 16" shape-rendering="crispEdges"><rect x="2" y="0" width="12" height="9" fill="#0ff"/><rect x="2" y="9" width="12" height="7" fill="#ff0"/><g shape-rendering="auto" stroke="#000" fill="none" stroke-linecap="round"><circle cx="9.5" cy="2.5" r="1.3" fill="#000" stroke="none"/><path d="M9,4.5 L7.5,9.5 L10.5,12 L11,15" stroke-width="1.6"/><path d="M7.5,9.5 L5.5,12 L3.5,14.5" stroke-width="1.6"/><path d="M8.8,5.5 L5.5,8 M8.8,5.5 L11.5,8.5 L13,8" stroke-width="1.2"/></g></svg><svg style="left:369.6px;top:138.5px;" width="16" height="16" viewBox="0 0 16 16" shape-rendering="crispEdges"><g shape-rendering="auto"><circle cx="8" cy="8" r="7.2" fill="#e8e8e8" stroke="#000" stroke-width="1.1"/><circle cx="8" cy="8" r="5.9" fill="#000"/><circle cx="8" cy="8" r="2.7" fill="#7c7c7c"/><circle cx="8" cy="8" r="1.5" fill="#8c8c8c"/></g></svg><div class="sep" style="left:392px;top:137px;width:2px;height:18px;"></div><span style="left:395px;top:138.0px;font-size:11px;line-height:15px;color:#000;letter-spacing:0.208px;font-weight:bold;">SCAN</span><div style="left:432px;top:135px;width:66px;height:21px;background:#e4e4e4;border:1px solid #c8c8c8;"><svg style="left:48px;top:5px" width="12" height="10" viewBox="0 0 12 10"><path d="M2 3 L6 7 L10 3" fill="none" stroke="#444" stroke-width="1.1"/></svg></div><div class="sep" style="left:500px;top:137px;width:2px;height:18px;"></div><span style="left:503px;top:138.0px;font-size:11px;line-height:15px;color:#000;letter-spacing:0.518px;font-weight:bold;">EMU</span><svg style="left:536.6px;top:138.5px;" width="16" height="16" viewBox="0 0 16 16" shape-rendering="crispEdges"><g shape-rendering="auto"><circle cx="8" cy="8" r="7.2" fill="#e8e8e8" stroke="#000" stroke-width="1.1"/><circle cx="8" cy="8" r="5.9" fill="#000"/><circle cx="8" cy="8" r="2.7" fill="#7c7c7c"/><circle cx="8" cy="8" r="1.5" fill="#8c8c8c"/></g></svg><div class="sep" style="left:559px;top:137px;width:2px;height:18px;"></div><span style="left:562px;top:138.0px;font-size:11px;line-height:15px;color:#000;letter-spacing:0.258px;font-weight:bold;">REC</span><svg style="left:593.4px;top:138.5px;" width="16" height="16" viewBox="0 0 16 16" shape-rendering="crispEdges"><g shape-rendering="auto"><circle cx="8" cy="8" r="7.2" fill="#e8e8e8" stroke="#000" stroke-width="1.1"/><circle cx="8" cy="8" r="5.9" fill="#000"/><circle cx="8" cy="8" r="2.7" fill="#7c7c7c"/><circle cx="8" cy="8" r="1.5" fill="#8c8c8c"/></g></svg><div style="left:116px;top:164px;width:172px;height:385px;background:#000;"></div><div style="left:116px;top:164px;width:49px;height:21px;background:#c0c0c0;border-right:1px solid #000;border-bottom:1px solid #000;"></div><div style="left:165px;top:164px;width:51px;height:21px;background:#c0c0c0;border-bottom:1px solid #000;border-right:1px solid #c0c0c0;"></div><span style="left:132.7px;top:164.0px;font-size:13px;line-height:17px;color:#0000f0;transform:scaleX(0.9276);transform-origin:left center;font-weight:bold;">RPM</span><span style="left:185.5px;top:163.5px;font-size:13px;line-height:17px;color:#0000f0;letter-spacing:0.670px;font-weight:bold;">--</span><div style="left:116px;top:185px;width:49px;height:19px;background:#c0c0c0;border-right:1px solid #000;border-bottom:1px solid #000;"></div><span style="left:137.2px;top:185.0px;font-size:13px;line-height:17px;color:#0000f0;transform:scaleX(1.0742);transform-origin:left center;font-weight:bold;">750</span><div style="left:165px;top:185px;width:51px;height:19px;background:#ff0000;border-right:1px solid #c8c8c8;border-bottom:1px solid #c8c8c8;"></div><span style="left:174.3px;top:185.0px;font-size:13px;line-height:17px;color:#fff;transform:scaleX(0.9456);transform-origin:left center;">225,00</span><div style="left:116px;top:204px;width:49px;height:19px;background:#c0c0c0;border-right:1px solid #000;border-bottom:1px solid #000;"></div><span style="left:129.3px;top:204.0px;font-size:13px;line-height:17px;color:#0000f0;transform:scaleX(1.0788);transform-origin:left center;font-weight:bold;">1500</span><div style="left:165px;top:204px;width:51px;height:19px;background:#ff0000;border-right:1px solid #c8c8c8;border-bottom:1px solid #c8c8c8;"></div><span style="left:174.3px;top:204.0px;font-size:13px;line-height:17px;color:#fff;transform:scaleX(0.9456);transform-origin:left center;">225,00</span><div style="left:116px;top:223px;width:49px;height:19px;background:#c0c0c0;border-right:1px solid #000;border-bottom:1px solid #000;"></div><span style="left:129.3px;top:223.0px;font-size:13px;line-height:17px;color:#0000f0;transform:scaleX(1.0788);transform-origin:left center;font-weight:bold;">1750</span><div style="left:165px;top:223px;width:51px;height:19px;background:#ff0000;border-right:1px solid #c8c8c8;border-bottom:1px solid #c8c8c8;"></div><span style="left:174.3px;top:223.0px;font-size:13px;line-height:17px;color:#fff;transform:scaleX(0.9456);transform-origin:left center;">225,00</span><div style="left:116px;top:242px;width:49px;height:19px;background:#c0c0c0;border-right:1px solid #000;border-bottom:1px solid #000;"></div><span style="left:129.3px;top:242.0px;font-size:13px;line-height:17px;color:#0000f0;transform:scaleX(1.0788);transform-origin:left center;font-weight:bold;">1850</span><div style="left:165px;top:242px;width:51px;height:19px;background:#ff0000;border-right:1px solid #c8c8c8;border-bottom:1px solid #c8c8c8;"></div><span style="left:174.3px;top:242.0px;font-size:13px;line-height:17px;color:#fff;transform:scaleX(0.9456);transform-origin:left center;">225,00</span><div style="left:116px;top:261px;width:49px;height:19px;background:#c0c0c0;border-right:1px solid #000;border-bottom:1px solid #000;"></div><span style="left:129.3px;top:261.0px;font-size:13px;line-height:17px;color:#0000f0;transform:scaleX(1.0788);transform-origin:left center;font-weight:bold;">2000</span><div style="left:165px;top:261px;width:51px;height:19px;background:#ff0000;border-right:1px solid #c8c8c8;border-bottom:1px solid #c8c8c8;"></div><span style="left:174.3px;top:261.0px;font-size:13px;line-height:17px;color:#fff;transform:scaleX(0.9456);transform-origin:left center;">241,80</span><div style="left:116px;top:280px;width:49px;height:19px;background:#c0c0c0;border-right:1px solid #000;border-bottom:1px solid #000;"></div><span style="left:129.3px;top:280.0px;font-size:13px;line-height:17px;color:#0000f0;transform:scaleX(1.0788);transform-origin:left center;font-weight:bold;">2500</span><div style="left:165px;top:280px;width:51px;height:19px;background:#ff0000;border-right:1px solid #c8c8c8;border-bottom:1px solid #c8c8c8;"></div><span style="left:174.3px;top:280.0px;font-size:13px;line-height:17px;color:#fff;transform:scaleX(0.9456);transform-origin:left center;">263,67</span><div style="left:116px;top:299px;width:49px;height:19px;background:#c0c0c0;border-right:1px solid #000;border-bottom:1px solid #000;"></div><span style="left:129.3px;top:299.0px;font-size:13px;line-height:17px;color:#0000f0;transform:scaleX(1.0788);transform-origin:left center;font-weight:bold;">3000</span><div style="left:165px;top:299px;width:51px;height:19px;background:#ff0000;border-right:1px solid #c8c8c8;border-bottom:1px solid #c8c8c8;"></div><span style="left:174.3px;top:299.0px;font-size:13px;line-height:17px;color:#fff;transform:scaleX(0.9456);transform-origin:left center;">276,20</span><div style="left:116px;top:318px;width:49px;height:19px;background:#c0c0c0;border-right:1px solid #000;border-bottom:1px solid #000;"></div><span style="left:129.3px;top:318.0px;font-size:13px;line-height:17px;color:#0000f0;transform:scaleX(1.0788);transform-origin:left center;font-weight:bold;">3500</span><div style="left:165px;top:318px;width:51px;height:19px;background:#ff0000;border-right:1px solid #c8c8c8;border-bottom:1px solid #c8c8c8;"></div><span style="left:174.3px;top:318.0px;font-size:13px;line-height:17px;color:#fff;transform:scaleX(0.9456);transform-origin:left center;">281,00</span><div style="left:116px;top:337px;width:49px;height:19px;background:#c0c0c0;border-right:1px solid #000;border-bottom:1px solid #000;"></div><span style="left:129.3px;top:337.0px;font-size:13px;line-height:17px;color:#0000f0;transform:scaleX(1.0788);transform-origin:left center;font-weight:bold;">4000</span><div style="left:165px;top:337px;width:51px;height:19px;background:#ff0000;border-right:1px solid #c8c8c8;border-bottom:1px solid #c8c8c8;"></div><span style="left:174.3px;top:337.0px;font-size:13px;line-height:17px;color:#fff;transform:scaleX(0.9456);transform-origin:left center;">283,00</span><div style="left:116px;top:356px;width:49px;height:19px;background:#c0c0c0;border-right:1px solid #000;border-bottom:1px solid #000;"></div><span style="left:129.3px;top:356.0px;font-size:13px;line-height:17px;color:#0000f0;transform:scaleX(1.0788);transform-origin:left center;font-weight:bold;">4500</span><div style="left:165px;top:356px;width:51px;height:19px;background:#ff0000;border-right:1px solid #c8c8c8;border-bottom:1px solid #c8c8c8;"></div><span style="left:174.3px;top:356.0px;font-size:13px;line-height:17px;color:#fff;transform:scaleX(0.9456);transform-origin:left center;">283,61</span><div style="left:116px;top:375px;width:49px;height:19px;background:#c0c0c0;border-right:1px solid #000;border-bottom:1px solid #000;"></div><span style="left:129.3px;top:375.0px;font-size:13px;line-height:17px;color:#0000f0;transform:scaleX(1.0788);transform-origin:left center;font-weight:bold;">4800</span><div style="left:165px;top:375px;width:51px;height:19px;background:#ff0000;border-right:1px solid #c8c8c8;border-bottom:1px solid #c8c8c8;"></div><span style="left:174.3px;top:375.0px;font-size:13px;line-height:17px;color:#fff;transform:scaleX(0.9456);transform-origin:left center;">284,40</span><div style="left:116px;top:394px;width:49px;height:19px;background:#c0c0c0;border-right:1px solid #000;border-bottom:1px solid #000;"></div><span style="left:129.3px;top:394.0px;font-size:13px;line-height:17px;color:#0000f0;transform:scaleX(1.0788);transform-origin:left center;font-weight:bold;">4918</span><div style="left:165px;top:394px;width:51px;height:19px;background:#ff0000;border-right:1px solid #c8c8c8;border-bottom:1px solid #c8c8c8;"></div><span style="left:174.3px;top:394.0px;font-size:13px;line-height:17px;color:#fff;transform:scaleX(0.9456);transform-origin:left center;">284,72</span><div style="left:116px;top:413px;width:49px;height:19px;background:#c0c0c0;border-right:1px solid #000;border-bottom:1px solid #000;"></div><span style="left:129.3px;top:413.0px;font-size:13px;line-height:17px;color:#0000f0;transform:scaleX(1.0788);transform-origin:left center;font-weight:bold;">5000</span><div style="left:165px;top:413px;width:51px;height:19px;background:#ff0000;border-right:1px solid #c8c8c8;border-bottom:1px solid #c8c8c8;"></div><span style="left:174.3px;top:413.0px;font-size:13px;line-height:17px;color:#fff;transform:scaleX(0.9456);transform-origin:left center;">283,00</span><div style="left:116px;top:432px;width:49px;height:19px;background:#c0c0c0;border-right:1px solid #000;border-bottom:1px solid #000;"></div><span style="left:129.3px;top:432.0px;font-size:13px;line-height:17px;color:#0000f0;transform:scaleX(1.0788);transform-origin:left center;font-weight:bold;">5500</span><div style="left:165px;top:432px;width:51px;height:19px;background:#ff0000;border-right:1px solid #c8c8c8;border-bottom:1px solid #c8c8c8;"></div><span style="left:174.3px;top:432.0px;font-size:13px;line-height:17px;color:#fff;transform:scaleX(0.9456);transform-origin:left center;">281,00</span><div style="left:116px;top:451px;width:49px;height:19px;background:#c0c0c0;border-right:1px solid #000;border-bottom:1px solid #000;"></div><span style="left:129.3px;top:451.0px;font-size:13px;line-height:17px;color:#0000f0;transform:scaleX(1.0788);transform-origin:left center;font-weight:bold;">6000</span><div style="left:165px;top:451px;width:51px;height:19px;background:#ff0000;border-right:1px solid #c8c8c8;border-bottom:1px solid #c8c8c8;"></div><span style="left:174.3px;top:451.0px;font-size:13px;line-height:17px;color:#fff;transform:scaleX(0.9456);transform-origin:left center;">272,00</span><div style="left:116px;top:470px;width:49px;height:19px;background:#c0c0c0;border-right:1px solid #000;border-bottom:1px solid #000;"></div><span style="left:129.3px;top:470.0px;font-size:13px;line-height:17px;color:#0000f0;transform:scaleX(1.0788);transform-origin:left center;font-weight:bold;">6500</span><div style="left:165px;top:470px;width:51px;height:19px;background:#008000;border-right:1px solid #c8c8c8;border-bottom:1px solid #c8c8c8;"></div><span style="left:174.3px;top:470.0px;font-size:13px;line-height:17px;color:#fff;transform:scaleX(0.9456);transform-origin:left center;">247,00</span><div style="left:114px;top:160px;width:581px;height:1px;background:#fbfbfb;"></div><div style="left:114px;top:161px;width:581px;height:1px;background:#a0a0a0;"></div><div style="left:115px;top:162px;width:175px;height:1px;background:#a0a0a0;"></div><div style="left:115px;top:163px;width:174px;height:1px;background:#fff;"></div><div style="left:115px;top:163px;width:1px;height:387px;background:#fff;"></div><div style="left:288px;top:163px;width:1px;height:460px;background:#fff;"></div><div style="left:289px;top:162px;width:2px;height:461px;background:#a0a0a0;"></div><div style="left:291px;top:162px;width:1px;height:461px;background:#000;"></div><div style="left:292px;top:162px;width:1px;height:461px;background:#909090;"></div><div style="left:293px;top:162px;width:1px;height:461px;background:#000;"></div><div style="left:294px;top:162px;width:1px;height:461px;background:#fff;"></div><div style="left:114px;top:549px;width:174px;height:74px;overflow:hidden;background:#f0f0f0;"><div style="left:0;top:0;width:400px;height:1px;background:#fff"></div><div style="left:0;top:72px;width:400px;height:1px;background:#dcdcdc"></div><div style="left:2px;top:8px;width:172px;height:1px;background:#dcdcdc;"></div><div style="left:2px;top:9px;width:172px;height:1px;background:#fff;"></div><div style="left:10px;top:2px;width:110px;height:12px;background:#f0f0f0;"></div><span style="left:12.5px;top:0.5px;font-size:12px;line-height:16px;color:#000;letter-spacing:-0.076px;font-weight:bold;">Données chargées</span><div class="edit" style="left:87px;top:24px;width:80px;height:21px;"><span style="left:3px;top:2.0px;font-size:11px;line-height:15px;color:#0000f0;letter-spacing:-0.248px;">28E0C990</span></div><span style="left:107px;top:9.5px;font-size:12px;line-height:16px;color:#000;letter-spacing:-0.057px;font-weight:bold;">32 bit</span><span style="left:77.5px;top:28.0px;font-size:12px;line-height:16px;color:#000;font-weight:bold;">gi</span><div class="edit" style="left:-1px;top:24px;width:78px;height:21px;"><span style="left:0px;top:2.0px;font-size:11px;line-height:15px;color:#0000f0;letter-spacing:-0.081px;">ABDE9B29</span></div><span style="left:20px;top:9.5px;font-size:12px;line-height:16px;color:#000;letter-spacing:-0.057px;font-weight:bold;">16 bit</span><div class="edit" style="left:2px;top:50px;width:165px;height:21px;"><span style="left:2px;top:1.5px;font-size:12px;line-height:16px;color:#000;letter-spacing:-0.652px;">0AJ_C990.DRT</span></div></div><div style="left:295px;top:161px;width:400px;height:1px;background:#b4b4b4;"></div><div style="left:295px;top:162px;width:400px;height:197px;background:linear-gradient(#fffb84,#fffc98 30%,#fffdc6 70%,#fffffa);border-bottom:1px solid #d4d4d4;border-right:2px solid #d3cc9c;"></div><svg style="left:285px;top:158px" width="410" height="202" viewBox="285 158 410 202"><line x1="335.29999999999995" x2="684.2" y1="328.0" y2="328.0" stroke="#d6d4c2" stroke-width="1.4"/><line x1="335.29999999999995" x2="684.2" y1="313.5" y2="313.5" stroke="#d6d4c2" stroke-width="1.4"/><line x1="335.29999999999995" x2="684.2" y1="299.0" y2="299.0" stroke="#d6d4c2" stroke-width="1.4"/><line x1="335.29999999999995" x2="684.2" y1="284.6" y2="284.6" stroke="#d6d4c2" stroke-width="1.4"/><line x1="335.29999999999995" x2="684.2" y1="270.1" y2="270.1" stroke="#d6d4c2" stroke-width="1.4"/><line x1="335.29999999999995" x2="684.2" y1="255.6" y2="255.6" stroke="#d6d4c2" stroke-width="1.4"/><line x1="335.29999999999995" x2="684.2" y1="241.2" y2="241.2" stroke="#d6d4c2" stroke-width="1.4"/><line x1="335.29999999999995" x2="684.2" y1="226.7" y2="226.7" stroke="#d6d4c2" stroke-width="1.4"/><line x1="335.29999999999995" x2="684.2" y1="212.2" y2="212.2" stroke="#d6d4c2" stroke-width="1.4"/><line x1="335.29999999999995" x2="684.2" y1="197.8" y2="197.8" stroke="#d6d4c2" stroke-width="1.4"/><line y1="188.1" y2="338.5" x1="347.0" x2="347.0" stroke="#d6d4c2" stroke-width="1.4"/><line y1="188.1" y2="338.5" x1="390.3" x2="390.3" stroke="#d6d4c2" stroke-width="1.4"/><line y1="188.1" y2="338.5" x1="433.6" x2="433.6" stroke="#d6d4c2" stroke-width="1.4"/><line y1="188.1" y2="338.5" x1="476.8" x2="476.8" stroke="#d6d4c2" stroke-width="1.4"/><line y1="188.1" y2="338.5" x1="520.1" x2="520.1" stroke="#d6d4c2" stroke-width="1.4"/><line y1="188.1" y2="338.5" x1="563.4" x2="563.4" stroke="#d6d4c2" stroke-width="1.4"/><line y1="188.1" y2="338.5" x1="606.7" x2="606.7" stroke="#d6d4c2" stroke-width="1.4"/><line y1="188.1" y2="338.5" x1="650.0" x2="650.0" stroke="#d6d4c2" stroke-width="1.4"/><line y1="339.0" y2="341.5" x1="347.0" x2="347.0" stroke="#bebeb2" stroke-width="1.3"/><line y1="339.0" y2="341.5" x1="357.8" x2="357.8" stroke="#bebeb2" stroke-width="1.3"/><line y1="339.0" y2="341.5" x1="368.6" x2="368.6" stroke="#bebeb2" stroke-width="1.3"/><line y1="339.0" y2="341.5" x1="379.5" x2="379.5" stroke="#bebeb2" stroke-width="1.3"/><line y1="339.0" y2="341.5" x1="390.3" x2="390.3" stroke="#bebeb2" stroke-width="1.3"/><line y1="339.0" y2="341.5" x1="401.1" x2="401.1" stroke="#bebeb2" stroke-width="1.3"/><line y1="339.0" y2="341.5" x1="411.9" x2="411.9" stroke="#bebeb2" stroke-width="1.3"/><line y1="339.0" y2="341.5" x1="422.7" x2="422.7" stroke="#bebeb2" stroke-width="1.3"/><line y1="339.0" y2="341.5" x1="433.6" x2="433.6" stroke="#bebeb2" stroke-width="1.3"/><line y1="339.0" y2="341.5" x1="444.4" x2="444.4" stroke="#bebeb2" stroke-width="1.3"/><line y1="339.0" y2="341.5" x1="455.2" x2="455.2" stroke="#bebeb2" stroke-width="1.3"/><line y1="339.0" y2="341.5" x1="466.0" x2="466.0" stroke="#bebeb2" stroke-width="1.3"/><line y1="339.0" y2="341.5" x1="476.8" x2="476.8" stroke="#bebeb2" stroke-width="1.3"/><line y1="339.0" y2="341.5" x1="487.7" x2="487.7" stroke="#bebeb2" stroke-width="1.3"/><line y1="339.0" y2="341.5" x1="498.5" x2="498.5" stroke="#bebeb2" stroke-width="1.3"/><line y1="339.0" y2="341.5" x1="509.3" x2="509.3" stroke="#bebeb2" stroke-width="1.3"/><line y1="339.0" y2="341.5" x1="520.1" x2="520.1" stroke="#bebeb2" stroke-width="1.3"/><line y1="339.0" y2="341.5" x1="530.9" x2="530.9" stroke="#bebeb2" stroke-width="1.3"/><line y1="339.0" y2="341.5" x1="541.8" x2="541.8" stroke="#bebeb2" stroke-width="1.3"/><line y1="339.0" y2="341.5" x1="552.6" x2="552.6" stroke="#bebeb2" stroke-width="1.3"/><line y1="339.0" y2="341.5" x1="563.4" x2="563.4" stroke="#bebeb2" stroke-width="1.3"/><line y1="339.0" y2="341.5" x1="574.2" x2="574.2" stroke="#bebeb2" stroke-width="1.3"/><line y1="339.0" y2="341.5" x1="585.0" x2="585.0" stroke="#bebeb2" stroke-width="1.3"/><line y1="339.0" y2="341.5" x1="595.9" x2="595.9" stroke="#bebeb2" stroke-width="1.3"/><line y1="339.0" y2="341.5" x1="606.7" x2="606.7" stroke="#bebeb2" stroke-width="1.3"/><line y1="339.0" y2="341.5" x1="617.5" x2="617.5" stroke="#bebeb2" stroke-width="1.3"/><line y1="339.0" y2="341.5" x1="628.3" x2="628.3" stroke="#bebeb2" stroke-width="1.3"/><line y1="339.0" y2="341.5" x1="639.1" x2="639.1" stroke="#bebeb2" stroke-width="1.3"/><line y1="339.0" y2="341.5" x1="650.0" x2="650.0" stroke="#bebeb2" stroke-width="1.3"/><line y1="339.0" y2="341.5" x1="660.8" x2="660.8" stroke="#bebeb2" stroke-width="1.3"/><line y1="339.0" y2="341.5" x1="671.6" x2="671.6" stroke="#bebeb2" stroke-width="1.3"/><line x1="332.09999999999997" x2="334.09999999999997" y1="333.7" y2="333.7" stroke="#d2d2bc" stroke-width="0.9"/><line x1="332.09999999999997" x2="334.09999999999997" y1="330.8" y2="330.8" stroke="#d2d2bc" stroke-width="0.9"/><line x1="332.09999999999997" x2="334.09999999999997" y1="328.0" y2="328.0" stroke="#d2d2bc" stroke-width="0.9"/><line x1="332.09999999999997" x2="334.09999999999997" y1="325.1" y2="325.1" stroke="#d2d2bc" stroke-width="0.9"/><line x1="332.09999999999997" x2="334.09999999999997" y1="322.2" y2="322.2" stroke="#d2d2bc" stroke-width="0.9"/><line x1="332.09999999999997" x2="334.09999999999997" y1="319.3" y2="319.3" stroke="#d2d2bc" stroke-width="0.9"/><line x1="332.09999999999997" x2="334.09999999999997" y1="316.4" y2="316.4" stroke="#d2d2bc" stroke-width="0.9"/><line x1="332.09999999999997" x2="334.09999999999997" y1="313.5" y2="313.5" stroke="#d2d2bc" stroke-width="0.9"/><line x1="332.09999999999997" x2="334.09999999999997" y1="310.6" y2="310.6" stroke="#d2d2bc" stroke-width="0.9"/><line x1="332.09999999999997" x2="334.09999999999997" y1="307.7" y2="307.7" stroke="#d2d2bc" stroke-width="0.9"/><line x1="332.09999999999997" x2="334.09999999999997" y1="304.8" y2="304.8" stroke="#d2d2bc" stroke-width="0.9"/><line x1="332.09999999999997" x2="334.09999999999997" y1="301.9" y2="301.9" stroke="#d2d2bc" stroke-width="0.9"/><line x1="332.09999999999997" x2="334.09999999999997" y1="299.0" y2="299.0" stroke="#d2d2bc" stroke-width="0.9"/><line x1="332.09999999999997" x2="334.09999999999997" y1="296.1" y2="296.1" stroke="#d2d2bc" stroke-width="0.9"/><line x1="332.09999999999997" x2="334.09999999999997" y1="293.2" y2="293.2" stroke="#d2d2bc" stroke-width="0.9"/><line x1="332.09999999999997" x2="334.09999999999997" y1="290.3" y2="290.3" stroke="#d2d2bc" stroke-width="0.9"/><line x1="332.09999999999997" x2="334.09999999999997" y1="287.4" y2="287.4" stroke="#d2d2bc" stroke-width="0.9"/><line x1="332.09999999999997" x2="334.09999999999997" y1="284.6" y2="284.6" stroke="#d2d2bc" stroke-width="0.9"/><line x1="332.09999999999997" x2="334.09999999999997" y1="281.7" y2="281.7" stroke="#d2d2bc" stroke-width="0.9"/><line x1="332.09999999999997" x2="334.09999999999997" y1="278.8" y2="278.8" stroke="#d2d2bc" stroke-width="0.9"/><line x1="332.09999999999997" x2="334.09999999999997" y1="275.9" y2="275.9" stroke="#d2d2bc" stroke-width="0.9"/><line x1="332.09999999999997" x2="334.09999999999997" y1="273.0" y2="273.0" stroke="#d2d2bc" stroke-width="0.9"/><line x1="332.09999999999997" x2="334.09999999999997" y1="270.1" y2="270.1" stroke="#d2d2bc" stroke-width="0.9"/><line x1="332.09999999999997" x2="334.09999999999997" y1="267.2" y2="267.2" stroke="#d2d2bc" stroke-width="0.9"/><line x1="332.09999999999997" x2="334.09999999999997" y1="264.3" y2="264.3" stroke="#d2d2bc" stroke-width="0.9"/><line x1="332.09999999999997" x2="334.09999999999997" y1="261.4" y2="261.4" stroke="#d2d2bc" stroke-width="0.9"/><line x1="332.09999999999997" x2="334.09999999999997" y1="258.5" y2="258.5" stroke="#d2d2bc" stroke-width="0.9"/><line x1="332.09999999999997" x2="334.09999999999997" y1="255.6" y2="255.6" stroke="#d2d2bc" stroke-width="0.9"/><line x1="332.09999999999997" x2="334.09999999999997" y1="252.7" y2="252.7" stroke="#d2d2bc" stroke-width="0.9"/><line x1="332.09999999999997" x2="334.09999999999997" y1="249.8" y2="249.8" stroke="#d2d2bc" stroke-width="0.9"/><line x1="332.09999999999997" x2="334.09999999999997" y1="246.9" y2="246.9" stroke="#d2d2bc" stroke-width="0.9"/><line x1="332.09999999999997" x2="334.09999999999997" y1="244.0" y2="244.0" stroke="#d2d2bc" stroke-width="0.9"/><line x1="332.09999999999997" x2="334.09999999999997" y1="241.2" y2="241.2" stroke="#d2d2bc" stroke-width="0.9"/><line x1="332.09999999999997" x2="334.09999999999997" y1="238.3" y2="238.3" stroke="#d2d2bc" stroke-width="0.9"/><line x1="332.09999999999997" x2="334.09999999999997" y1="235.4" y2="235.4" stroke="#d2d2bc" stroke-width="0.9"/><line x1="332.09999999999997" x2="334.09999999999997" y1="232.5" y2="232.5" stroke="#d2d2bc" stroke-width="0.9"/><line x1="332.09999999999997" x2="334.09999999999997" y1="229.6" y2="229.6" stroke="#d2d2bc" stroke-width="0.9"/><line x1="332.09999999999997" x2="334.09999999999997" y1="226.7" y2="226.7" stroke="#d2d2bc" stroke-width="0.9"/><line x1="332.09999999999997" x2="334.09999999999997" y1="223.8" y2="223.8" stroke="#d2d2bc" stroke-width="0.9"/><line x1="332.09999999999997" x2="334.09999999999997" y1="220.9" y2="220.9" stroke="#d2d2bc" stroke-width="0.9"/><line x1="332.09999999999997" x2="334.09999999999997" y1="218.0" y2="218.0" stroke="#d2d2bc" stroke-width="0.9"/><line x1="332.09999999999997" x2="334.09999999999997" y1="215.1" y2="215.1" stroke="#d2d2bc" stroke-width="0.9"/><line x1="332.09999999999997" x2="334.09999999999997" y1="212.2" y2="212.2" stroke="#d2d2bc" stroke-width="0.9"/><line x1="332.09999999999997" x2="334.09999999999997" y1="209.3" y2="209.3" stroke="#d2d2bc" stroke-width="0.9"/><line x1="332.09999999999997" x2="334.09999999999997" y1="206.4" y2="206.4" stroke="#d2d2bc" stroke-width="0.9"/><line x1="332.09999999999997" x2="334.09999999999997" y1="203.5" y2="203.5" stroke="#d2d2bc" stroke-width="0.9"/><line x1="332.09999999999997" x2="334.09999999999997" y1="200.6" y2="200.6" stroke="#d2d2bc" stroke-width="0.9"/><line x1="332.09999999999997" x2="334.09999999999997" y1="197.8" y2="197.8" stroke="#d2d2bc" stroke-width="0.9"/><line x1="332.09999999999997" x2="334.09999999999997" y1="194.9" y2="194.9" stroke="#d2d2bc" stroke-width="0.9"/><line x1="332.09999999999997" x2="334.09999999999997" y1="192.0" y2="192.0" stroke="#d2d2bc" stroke-width="0.9"/><line x1="332.09999999999997" x2="334.09999999999997" y1="189.1" y2="189.1" stroke="#d2d2bc" stroke-width="0.9"/><polyline points="347.0,334.0 368.6,319.8 390.3,302.7 411.9,295.3 433.6,284.0 455.2,266.8 476.8,259.0 498.5,257.1 520.1,251.9 541.8,244.4 563.4,236.2 585.0,234.3 606.7,235.3 628.3,259.6 650.0,282.2 671.6,310.5" fill="none" stroke="#3434f4" stroke-width="1.15"/><polyline points="347.0,277.8 368.6,277.8 390.3,277.8 411.9,277.8 433.6,253.5 455.2,221.9 476.8,203.7 498.5,196.8 520.1,193.9 541.8,193.0 563.4,191.9 585.0,191.4 606.7,193.9 628.3,196.8 650.0,209.8 671.6,246.0" fill="none" stroke="#f4301c" stroke-width="1.15"/><rect x="496.0" y="188.1" width="4.4" height="150.4" fill="#409a10"/><rect x="497.2" y="189.1" width="2.0" height="149.4" fill="#f08200"/><rect x="336.19999999999993" y="189.0" width="347.1000000000001" height="148.6" fill="none" stroke="#66643c" stroke-width="1.7"/></svg><span style="left:313.99999999999994px;top:322.0px;font-size:11px;line-height:15px;color:#000;letter-spacing:-0.284px;">190</span><span style="left:313.99999999999994px;top:307.0px;font-size:11px;line-height:15px;color:#000;letter-spacing:-0.284px;">200</span><span style="left:313.99999999999994px;top:293.0px;font-size:11px;line-height:15px;color:#000;letter-spacing:-0.284px;">210</span><span style="left:313.99999999999994px;top:279.0px;font-size:11px;line-height:15px;color:#000;letter-spacing:-0.284px;">220</span><span style="left:313.99999999999994px;top:264.0px;font-size:11px;line-height:15px;color:#000;letter-spacing:-0.284px;">230</span><span style="left:313.99999999999994px;top:250.0px;font-size:11px;line-height:15px;color:#000;letter-spacing:-0.284px;">240</span><span style="left:313.99999999999994px;top:235.0px;font-size:11px;line-height:15px;color:#000;letter-spacing:-0.284px;">250</span><span style="left:313.99999999999994px;top:221.0px;font-size:11px;line-height:15px;color:#000;letter-spacing:-0.284px;">260</span><span style="left:313.99999999999994px;top:206.0px;font-size:11px;line-height:15px;color:#000;letter-spacing:-0.284px;">270</span><span style="left:313.99999999999994px;top:192.0px;font-size:11px;line-height:15px;color:#000;letter-spacing:-0.284px;">280</span><span style="left:345.0px;top:340.5px;font-size:11px;line-height:15px;color:#000;letter-spacing:-0.117px;">0</span><span style="left:388.28px;top:340.5px;font-size:11px;line-height:15px;color:#000;letter-spacing:-0.117px;">2</span><span style="left:431.56px;top:340.5px;font-size:11px;line-height:15px;color:#000;letter-spacing:-0.117px;">4</span><span style="left:474.84000000000003px;top:340.5px;font-size:11px;line-height:15px;color:#000;letter-spacing:-0.117px;">6</span><span style="left:518.12px;top:340.5px;font-size:11px;line-height:15px;color:#000;letter-spacing:-0.117px;">8</span><span style="left:558.4px;top:340.5px;font-size:11px;line-height:15px;color:#000;letter-spacing:-0.117px;">10</span><span style="left:601.6800000000001px;top:340.5px;font-size:11px;line-height:15px;color:#000;letter-spacing:-0.117px;">12</span><span style="left:644.96px;top:340.5px;font-size:11px;line-height:15px;color:#000;letter-spacing:-0.117px;">14</span><span style="left:483px;top:169.5px;font-size:11px;line-height:15px;color:#2020e8;letter-spacing:-0.135px;">C = --</span><div style="left:295px;top:561px;width:400px;height:1px;background:#fff;"></div><div style="left:295px;top:622px;width:400px;height:1px;background:#fff;"></div><svg style="left:299px;top:571px" width="14" height="14" viewBox="0 0 14 14"><circle cx="7" cy="7" r="6" fill="#fff" stroke="#333" stroke-width="1"/></svg><svg style="left:299px;top:587px" width="14" height="14" viewBox="0 0 14 14"><circle cx="7" cy="7" r="6" fill="#fff" stroke="#333" stroke-width="1"/></svg><svg style="left:299px;top:603px" width="14" height="14" viewBox="0 0 14 14"><circle cx="7" cy="7" r="6" fill="#fff" stroke="#333" stroke-width="1"/><circle cx="7" cy="7" r="3.2" fill="#222"/></svg><span style="left:315px;top:570.5px;font-size:11px;line-height:15px;color:#000;letter-spacing:-0.041px;">Extrémités du driver</span><span style="left:315px;top:586.5px;font-size:11px;line-height:15px;color:#000;letter-spacing:-0.118px;">Extrémités linge/colonne</span><span style="left:315px;top:602.5px;font-size:11px;line-height:15px;color:#000;letter-spacing:-0.054px;">Extremités table</span><div style="left:113px;top:623px;width:582px;height:17px;background:#f0f0f0;"></div><div style="left:113px;top:623px;width:582px;height:1px;background:#fafafa;"></div><div style="left:403px;top:625px;width:1px;height:14px;background:#d7d7d7;"></div><div style="left:461px;top:625px;width:1px;height:14px;background:#d7d7d7;"></div><div style="left:519px;top:625px;width:1px;height:14px;background:#d7d7d7;"></div><div style="left:577px;top:625px;width:1px;height:14px;background:#d7d7d7;"></div><div style="left:635px;top:625px;width:1px;height:14px;background:#d7d7d7;"></div><span style="left:466px;top:625.0px;font-size:12px;line-height:16px;color:#000;letter-spacing:-0.442px;">K = 1,00</span><div style="left:520px;top:624px;width:56px;height:16px;overflow:hidden;"><span style="left:4px;top:1.0px;font-size:12px;line-height:16px;color:#000;letter-spacing:-0.518px;">Taille 16x1</span></div><span style="left:582px;top:625.0px;font-size:12px;line-height:16px;color:#000;letter-spacing:-0.442px;">K = 1,00</span><div style="left:636px;top:624px;width:41px;height:16px;overflow:hidden;"><span style="left:4px;top:1.0px;font-size:12px;line-height:16px;color:#000;letter-spacing:-0.085px;">Checksum</span></div><svg style="left:683px;top:628px" width="11" height="11" viewBox="0 0 11 11" shape-rendering="crispEdges" fill="#bfbfbf"><rect x="8" y="2" width="2" height="2"/><rect x="5" y="5" width="2" height="2"/><rect x="8" y="5" width="2" height="2"/><rect x="2" y="8" width="2" height="2"/><rect x="5" y="8" width="2" height="2"/><rect x="8" y="8" width="2" height="2"/></svg></div></div><div style="left:113px;top:47px;width:531px;height:594px;box-shadow:0 4px 18px 1px rgba(0,0,0,0.36), 0 0 6px rgba(0,0,0,0.12);"></div><div class="win" style="left:113px;top:47px;width:531px;height:594px;border:1px solid #6eb2f5;"><div style="left:-114px;top:-48px;width:1400px;height:800px;"><div style="left:113px;top:47px;width:530px;height:51px;background:#fff;"></div><svg style="left:122px;top:54px;" width="16" height="16" viewBox="0 0 16 16" shape-rendering="crispEdges"><g shape-rendering="auto"><defs><radialGradient id="ag113" cx="0.5" cy="0.45" r="0.6"><stop offset="0" stop-color="#ff9070"/><stop offset="0.45" stop-color="#e8301c"/><stop offset="1" stop-color="#8a120c"/></radialGradient></defs><path d="M4.6,1.4 L13.6,0.6 Q15.8,0.6 15.3,2.6 L13.2,12.8 Q12.8,14.6 11,14.8 L2.4,15.4 Q0.2,15.5 0.7,13.4 L2.7,3.2 Q3.1,1.5 4.6,1.4 Z" fill="url(#ag113)" stroke="#2a0806" stroke-width="0.9" stroke-dasharray="2.2 0.6"/><path d="M12.4,4.6 L6.2,4.9 Q4.9,5 4.7,6.2 L4,10.2 Q3.8,11.6 5.2,11.6 L11.2,11.3 L11.5,9.4 L6.6,9.6 L7,7.1 L12,6.9 Z" fill="#140a0a"/><path d="M7.3,7.6 L11.8,7.4 L11.6,8.9 L7.1,9.1 Z" fill="#ffd8c8" opacity="0.85"/><path d="M5.4,3.9 L12.6,3.5" stroke="#ff2010" stroke-width="0.8"/></g></svg><span style="left:143px;top:54.5px;font-size:12px;line-height:16px;color:#000;letter-spacing:-0.101px;">ECM Titanium 1.85.0.108 - Éditer table: Limiteur de couple maximu...</span><svg style="left:524px;top:47px" width="119" height="30" viewBox="0 0 119 30" fill="none" stroke="#000" stroke-width="1"><path d="M0 15.5 H10"/><path d="M45.5 10.5 H54.5 V19.5 H45.5 Z"/><path d="M91 10 L101 20 M101 10 L91 20"/></svg><span style="left:121px;top:79.5px;font-size:12px;line-height:16px;color:#000;letter-spacing:-0.144px;">Fichier</span><span style="left:170px;top:79.5px;font-size:12px;line-height:16px;color:#000;letter-spacing:0.066px;">Affichez</span><span style="left:227px;top:79.5px;font-size:12px;line-height:16px;color:#000;letter-spacing:0.188px;">Modification manuelle</span><span style="left:361px;top:79.5px;font-size:12px;line-height:16px;color:#000;letter-spacing:-0.127px;">BitPower</span><div class="tb" style="left:116px;top:99px;width:230px;height:29px;"></div><div class="tb" style="left:349px;top:99px;width:298px;height:29px;"></div><div class="tb" style="left:116px;top:131px;width:176px;height:29px;"></div><div class="tb" style="left:295px;top:131px;width:322px;height:29px;"></div><svg style="left:123px;top:107px;" width="16" height="16" viewBox="0 0 16 16" shape-rendering="crispEdges"><polygon points="8,0 16,6 0,6" fill="#000"/><polygon points="8,1 14,5.5 2,5.5" fill="#f00"/><rect x="1" y="6" width="14" height="9" fill="#000"/><rect x="2" y="6" width="11" height="8" fill="#ff0"/><rect x="4" y="10" width="3" height="4" fill="#000"/><rect x="5" y="11" width="2" height="3" fill="#0ff"/><rect x="14" y="7" width="1" height="8" fill="#404040"/></svg><svg style="left:146px;top:107px;" width="16" height="16" viewBox="0 0 16 16" shape-rendering="crispEdges"><rect x="0" y="1" width="12" height="12" fill="#000"/><rect x="1" y="2" width="10" height="10" fill="#fff"/><rect x="2" y="3" width="9" height="1" fill="#000080"/><rect x="3" y="3" width="11" height="11" fill="#000"/><rect x="4" y="4" width="9" height="9" fill="#fff"/><rect x="5" y="5" width="8" height="1" fill="#000080"/><rect x="6" y="5" width="10" height="10" fill="#000"/><rect x="7" y="6" width="8" height="8" fill="#fff"/><rect x="8" y="7" width="7" height="2" fill="#000080"/></svg><svg style="left:169px;top:107px;" width="16" height="16" viewBox="0 0 16 16" shape-rendering="crispEdges"><rect x="0" y="1" width="16" height="14" fill="#808080"/><rect x="15" y="1" width="1" height="14" fill="#000"/><rect x="0" y="14" width="16" height="1" fill="#000"/><rect x="1" y="2" width="14" height="12" fill="#fff"/><rect x="1" y="2" width="1" height="12" fill="#d8d8d8"/><rect x="2" y="3" width="12" height="2" fill="#000080"/><rect x="8" y="4" width="1" height="1" fill="#fff"/><rect x="10" y="4" width="1" height="1" fill="#fff"/><rect x="12" y="4" width="1" height="1" fill="#fff"/><rect x="4" y="6" width="2" height="7" fill="#000"/><rect x="10" y="6" width="2" height="7" fill="#000"/><rect x="6" y="9" width="4" height="1" fill="#000"/></svg><svg style="left:192px;top:107px;" width="16" height="16" viewBox="0 0 16 16" shape-rendering="crispEdges"><rect x="0" y="1" width="16" height="1" fill="#9a9a9a"/><rect x="0" y="5" width="16" height="1" fill="#9a9a9a"/><rect x="0" y="9" width="16" height="1" fill="#9a9a9a"/><rect x="0" y="3" width="2" height="1" fill="#9a9a9a"/><rect x="3" y="3" width="13" height="1" fill="#e4e4e4"/><rect x="0" y="7" width="2" height="1" fill="#9a9a9a"/><rect x="3" y="7" width="13" height="1" fill="#e4e4e4"/><rect x="0" y="11" width="2" height="1" fill="#9a9a9a"/><rect x="3" y="11" width="13" height="1" fill="#e4e4e4"/><rect x="2" y="1" width="1" height="13" fill="#000"/><rect x="0" y="13" width="16" height="1" fill="#000"/><rect x="2" y="14" width="1" height="2" fill="#9a9a9a"/><rect x="6" y="14" width="1" height="2" fill="#9a9a9a"/><rect x="10" y="14" width="1" height="2" fill="#9a9a9a"/><rect x="14" y="14" width="1" height="2" fill="#9a9a9a"/><polyline shape-rendering="auto" points="3,7.6 5.6,3.4 7.6,7.4 10.6,11.5 14.6,3.2" fill="none" stroke="#00f" stroke-width="1.25"/><polyline shape-rendering="auto" points="3.4,11.6 5.6,8.4 7.4,10.5 10.4,5.4 12.5,7.4 15,5.2" fill="none" stroke="#f00" stroke-width="1.25"/></svg><svg style="left:215px;top:107px;" width="16" height="16" viewBox="0 0 16 16" shape-rendering="crispEdges"><rect x="1" y="0" width="1" height="14" fill="#a6a6a6"/><rect x="1" y="13" width="15" height="1" fill="#a6a6a6"/><rect x="0" y="1" width="1" height="1" fill="#a6a6a6"/><rect x="0" y="3" width="1" height="1" fill="#a6a6a6"/><rect x="0" y="5" width="1" height="1" fill="#a6a6a6"/><rect x="0" y="7" width="1" height="1" fill="#a6a6a6"/><rect x="0" y="9" width="1" height="1" fill="#a6a6a6"/><rect x="0" y="11" width="1" height="1" fill="#a6a6a6"/><rect x="3" y="14" width="1" height="2" fill="#a6a6a6"/><rect x="5" y="14" width="1" height="2" fill="#a6a6a6"/><rect x="7" y="14" width="1" height="2" fill="#a6a6a6"/><rect x="9" y="14" width="1" height="2" fill="#a6a6a6"/><rect x="11" y="14" width="1" height="2" fill="#a6a6a6"/><rect x="13" y="14" width="1" height="2" fill="#a6a6a6"/><rect x="15" y="14" width="1" height="2" fill="#a6a6a6"/><text shape-rendering="auto" x="3.2" y="10.3" font-family="Liberation Sans" font-size="12.5" font-weight="bold" fill="#e8e8e8" stroke="#a6a6a6" stroke-width="0.95" textLength="12.6" lengthAdjust="spacingAndGlyphs">3D</text><polyline shape-rendering="auto" points="4,12.4 10,12 15.5,8.6" fill="none" stroke="#a6a6a6" stroke-width="1"/></svg><div class="sep" style="left:237px;top:105px;width:2px;height:18px;"></div><svg style="left:246px;top:107px;" width="16" height="16" viewBox="0 0 16 16" shape-rendering="crispEdges"><rect x="0" y="1" width="16" height="14" fill="#808080"/><rect x="15" y="1" width="1" height="14" fill="#000"/><rect x="0" y="14" width="16" height="1" fill="#000"/><rect x="1" y="2" width="14" height="12" fill="#fff"/><rect x="1" y="2" width="1" height="12" fill="#d8d8d8"/><rect x="2" y="3" width="12" height="2" fill="#000080"/><rect x="8" y="4" width="1" height="1" fill="#fff"/><rect x="10" y="4" width="1" height="1" fill="#fff"/><rect x="12" y="4" width="1" height="1" fill="#fff"/><polygon shape-rendering="auto" points="0.6,9.2 2.6,8.4 5.6,12.6 14.6,0 15.9,0.6 6.2,15.6 4.8,15.6" fill="#f00"/></svg><svg style="left:269px;top:107px;" width="16" height="16" viewBox="0 0 16 16" shape-rendering="crispEdges"><rect x="0" y="1" width="16" height="14" fill="#808080"/><rect x="15" y="1" width="1" height="14" fill="#000"/><rect x="0" y="14" width="16" height="1" fill="#000"/><rect x="1" y="2" width="14" height="12" fill="#fff"/><rect x="1" y="2" width="1" height="12" fill="#d8d8d8"/><rect x="2" y="3" width="12" height="2" fill="#000080"/><rect x="8" y="4" width="1" height="1" fill="#fff"/><rect x="10" y="4" width="1" height="1" fill="#fff"/><rect x="12" y="4" width="1" height="1" fill="#fff"/><rect x="7" y="2" width="2" height="6" fill="#000"/><rect x="7" y="9" width="2" height="2" fill="#000"/><circle shape-rendering="auto" cx="7.7" cy="7.4" r="6.5" fill="none" stroke="#f00" stroke-width="1.6"/><line shape-rendering="auto" x1="3.2" y1="12.2" x2="12.2" y2="2.6" stroke="#f00" stroke-width="1.6"/></svg><svg style="left:292px;top:107px;" width="16" height="16" viewBox="0 0 16 16" shape-rendering="crispEdges"><rect x="0" y="1" width="16" height="14" fill="#808080"/><rect x="15" y="1" width="1" height="14" fill="#000"/><rect x="0" y="14" width="16" height="1" fill="#000"/><rect x="1" y="2" width="14" height="12" fill="#fff"/><rect x="1" y="2" width="1" height="12" fill="#d8d8d8"/><rect x="2" y="3" width="12" height="2" fill="#000080"/><rect x="8" y="4" width="1" height="1" fill="#fff"/><rect x="10" y="4" width="1" height="1" fill="#fff"/><rect x="12" y="4" width="1" height="1" fill="#fff"/><rect x="5" y="7" width="2" height="5" fill="#f00"/><rect x="9" y="7" width="2" height="5" fill="#f00"/><rect x="6" y="6" width="4" height="1" fill="#f00"/><rect x="6" y="12" width="4" height="1" fill="#f00"/></svg><div class="sep" style="left:314px;top:105px;width:2px;height:18px;"></div><svg style="left:323px;top:107px;" width="16" height="16" viewBox="0 0 16 16" shape-rendering="crispEdges"><rect x="9" y="2" width="7" height="6" fill="#000"/><rect x="8" y="1" width="7" height="6" fill="#f00"/><polygon shape-rendering="auto" points="0,10.6 5.4,5.2 7,10.6" fill="#00f"/><polygon shape-rendering="auto" points="0,10.6 7,10.6 8,11.6 2,11.2" fill="#000"/><circle shape-rendering="auto" cx="11" cy="11" r="3.3" fill="#000"/><circle shape-rendering="auto" cx="10.3" cy="10.2" r="3.2" fill="#0f0"/></svg><div class="sep" style="left:354px;top:105px;width:2px;height:18px;"></div><span style="left:357px;top:106.5px;font-size:11px;line-height:15px;color:#000;letter-spacing:0.336px;font-weight:bold;">Mod.:</span><div class="edit" style="left:393px;top:103px;width:35px;height:22px;border-color:#d0d0d0;"><span style="left:1.5px;top:1.5px;font-size:11px;line-height:15px;color:#9a9a9a;">OUI</span></div><div class="sep" style="left:430px;top:105px;width:2px;height:18px;"></div><span style="left:435px;top:106.5px;font-size:11px;line-height:15px;color:#000;letter-spacing:0.952px;font-weight:bold;">+ -</span><div class="edit" style="left:457px;top:103px;width:50px;height:22px;"><span style="left:2.5px;top:1.5px;font-size:11px;line-height:15px;color:#000;">1,00</span></div><div style="left:508px;top:104px;width:15px;height:20px;background:linear-gradient(#f2f2f2,#e2e2e2);border:1px solid #adadad;"><div style="left:0;top:8px;width:13px;height:1px;background:#adadad"></div><svg style="left:-1px;top:-1px" width="15" height="20" viewBox="0 0 15 20"><path d="M4.5 6.5 L7.5 3 L10.5 6.5 Z M4.5 12.8 L7.5 16.3 L10.5 12.8 Z" fill="#111"/></svg></div><div class="sep" style="left:526px;top:105px;width:2px;height:18px;"></div><span style="left:530px;top:106.5px;font-size:11px;line-height:15px;color:#000;letter-spacing:0.535px;font-weight:bold;">Pg+ Pg-</span><div class="edit" style="left:581px;top:103px;width:50px;height:22px;"><span style="left:2.5px;top:1.5px;font-size:11px;line-height:15px;color:#000;">5,00</span></div><div style="left:632px;top:104px;width:15px;height:20px;background:linear-gradient(#f2f2f2,#e2e2e2);border:1px solid #adadad;"><div style="left:0;top:8px;width:13px;height:1px;background:#adadad"></div><svg style="left:-1px;top:-1px" width="15" height="20" viewBox="0 0 15 20"><path d="M4.5 6.5 L7.5 3 L10.5 6.5 Z M4.5 12.8 L7.5 16.3 L10.5 12.8 Z" fill="#111"/></svg></div><svg style="left:123px;top:139px;" width="16" height="16" viewBox="0 0 16 16" shape-rendering="crispEdges"><polygon points="0,4 1,3 4,3 5,4 11,4 11,8 1,13 0,13" fill="#000"/><polygon points="1,4 4,4 5,5 10,5 10,8 1,12" fill="#ff0"/><rect x="1" y="4" width="1" height="1" fill="#fff"/><rect x="3" y="4" width="1" height="1" fill="#fff"/><rect x="2" y="5" width="1" height="1" fill="#fff"/><rect x="4" y="5" width="1" height="1" fill="#fff"/><rect x="6" y="5" width="1" height="1" fill="#fff"/><rect x="8" y="5" width="1" height="1" fill="#fff"/><rect x="1" y="6" width="1" height="1" fill="#fff"/><rect x="3" y="6" width="1" height="1" fill="#fff"/><rect x="5" y="6" width="1" height="1" fill="#fff"/><rect x="7" y="6" width="1" height="1" fill="#fff"/><rect x="9" y="6" width="1" height="1" fill="#fff"/><rect x="2" y="7" width="1" height="1" fill="#fff"/><rect x="4" y="7" width="1" height="1" fill="#fff"/><rect x="6" y="7" width="1" height="1" fill="#fff"/><rect x="8" y="7" width="1" height="1" fill="#fff"/><rect x="1" y="8" width="1" height="1" fill="#fff"/><rect x="3" y="8" width="1" height="1" fill="#fff"/><rect x="5" y="8" width="1" height="1" fill="#fff"/><rect x="7" y="8" width="1" height="1" fill="#fff"/><rect x="2" y="9" width="1" height="1" fill="#fff"/><rect x="4" y="9" width="1" height="1" fill="#fff"/><rect x="1" y="10" width="1" height="1" fill="#fff"/><rect x="3" y="10" width="1" height="1" fill="#fff"/><rect x="2" y="11" width="1" height="1" fill="#fff"/><polygon shape-rendering="auto" points="0.3,13.2 4.2,7.4 16,7.4 11,13.2" fill="#000"/><polygon shape-rendering="auto" points="2,12.4 4.9,8.3 14.2,8.3 10.6,12.4" fill="#808000"/><path shape-rendering="auto" d="M8,1.8 Q10.8,-0.6 14,3" fill="none" stroke="#000" stroke-width="1.1"/><polygon points="15.2,1.4 15,5 11.6,4.2" fill="#000" shape-rendering="auto"/></svg><svg style="left:146px;top:139px;" width="16" height="16" viewBox="0 0 16 16" shape-rendering="crispEdges"><rect x="1" y="1" width="14" height="14" fill="#000"/><rect x="2" y="2" width="12" height="12" fill="#808000"/><rect x="4" y="1" width="9" height="7" fill="#000"/><rect x="4" y="2" width="8" height="6" fill="#d0d8d8"/><rect x="5" y="2" width="1" height="6" fill="#a8b0b0"/><rect x="11" y="2" width="1" height="6" fill="#a8b0b0"/><rect x="13" y="2" width="1" height="1" fill="#fff"/><rect x="4" y="10" width="9" height="5" fill="#000"/><rect x="10" y="11" width="2" height="3" fill="#e0e0e0"/><rect x="6" y="2" width="2" height="6" fill="#f00"/><rect x="8" y="2" width="2" height="1" fill="#f00"/><rect x="8" y="7" width="2" height="1" fill="#f00"/><rect x="9" y="3" width="2" height="4" fill="#f00"/><rect x="8" y="3" width="1" height="4" fill="#d0d8d8"/></svg><svg style="left:169px;top:139px;" width="16" height="16" viewBox="0 0 16 16" shape-rendering="crispEdges"><rect x="1" y="1" width="14" height="14" fill="#000"/><rect x="2" y="2" width="12" height="12" fill="#808000"/><rect x="4" y="1" width="9" height="7" fill="#000"/><rect x="4" y="2" width="8" height="6" fill="#d0d8d8"/><rect x="5" y="2" width="1" height="6" fill="#a8b0b0"/><rect x="11" y="2" width="1" height="6" fill="#a8b0b0"/><rect x="13" y="2" width="1" height="1" fill="#fff"/><rect x="4" y="10" width="9" height="5" fill="#000"/><rect x="10" y="11" width="2" height="3" fill="#e0e0e0"/><rect x="6" y="2" width="5" height="1" fill="#f00"/><rect x="8" y="2" width="2" height="6" fill="#f00"/><rect x="6" y="7" width="5" height="1" fill="#f00"/></svg><div class="sep" style="left:191px;top:137px;width:2px;height:18px;"></div><div class="hl" style="left:197px;top:135px;width:23px;height:22px;"></div><div class="hl" style="left:266px;top:135px;width:23px;height:22px;"></div><svg style="left:200px;top:139px;" width="16" height="16" viewBox="0 0 16 16" shape-rendering="crispEdges"><rect x="0" y="1" width="16" height="14" fill="#808080"/><rect x="15" y="1" width="1" height="14" fill="#000"/><rect x="0" y="14" width="16" height="1" fill="#000"/><rect x="1" y="2" width="14" height="12" fill="#c9d8f2"/><rect x="1" y="2" width="1" height="12" fill="#d8d8d8"/><rect x="2" y="3" width="12" height="2" fill="#000080"/><rect x="8" y="4" width="1" height="1" fill="#c9d8f2"/><rect x="10" y="4" width="1" height="1" fill="#c9d8f2"/><rect x="12" y="4" width="1" height="1" fill="#c9d8f2"/><rect x="5" y="6" width="2" height="7" fill="#000"/><rect x="7" y="6" width="2" height="1" fill="#000"/><rect x="7" y="12" width="2" height="1" fill="#000"/><rect x="9" y="7" width="2" height="5" fill="#000"/></svg><svg style="left:223px;top:139px;" width="16" height="16" viewBox="0 0 16 16" shape-rendering="crispEdges"><rect x="0" y="1" width="16" height="14" fill="#808080"/><rect x="15" y="1" width="1" height="14" fill="#000"/><rect x="0" y="14" width="16" height="1" fill="#000"/><rect x="1" y="2" width="14" height="12" fill="#fff"/><rect x="1" y="2" width="1" height="12" fill="#d8d8d8"/><rect x="2" y="3" width="12" height="2" fill="#000080"/><rect x="8" y="4" width="1" height="1" fill="#fff"/><rect x="10" y="4" width="1" height="1" fill="#fff"/><rect x="12" y="4" width="1" height="1" fill="#fff"/><rect x="5" y="7" width="2" height="5" fill="#000"/><rect x="9" y="7" width="2" height="5" fill="#000"/><rect x="6" y="6" width="4" height="1" fill="#000"/><rect x="6" y="12" width="4" height="1" fill="#000"/></svg><svg style="left:246px;top:139px;" width="16" height="16" viewBox="0 0 16 16" shape-rendering="crispEdges"><rect x="0" y="1" width="16" height="14" fill="#808080"/><rect x="15" y="1" width="1" height="14" fill="#000"/><rect x="0" y="14" width="16" height="1" fill="#000"/><rect x="1" y="2" width="14" height="12" fill="#fff"/><rect x="1" y="2" width="1" height="12" fill="#d8d8d8"/><rect x="2" y="3" width="12" height="2" fill="#000080"/><rect x="8" y="4" width="1" height="1" fill="#fff"/><rect x="10" y="4" width="1" height="1" fill="#fff"/><rect x="12" y="4" width="1" height="1" fill="#fff"/><rect x="6" y="6" width="4" height="1" fill="#000"/><rect x="7" y="6" width="2" height="7" fill="#000"/><rect x="6" y="12" width="4" height="1" fill="#000"/></svg><svg style="left:269px;top:139px;" width="16" height="16" viewBox="0 0 16 16" shape-rendering="crispEdges"><rect x="1" y="1" width="14" height="14" fill="#000080"/><rect x="6" y="2" width="1" height="1" fill="#fff"/><rect x="12" y="2" width="1" height="1" fill="#fff"/><rect x="2" y="4" width="5" height="10" fill="#fff"/><rect x="9" y="4" width="5" height="10" fill="#808080"/><rect x="7" y="4" width="2" height="11" fill="#000080"/></svg><svg style="left:301px;top:139px;" width="16" height="16" viewBox="0 0 16 16" shape-rendering="crispEdges"><rect x="0" y="1" width="16" height="14" fill="#808080"/><rect x="15" y="1" width="1" height="14" fill="#000"/><rect x="0" y="14" width="16" height="1" fill="#000"/><rect x="1" y="2" width="14" height="12" fill="#fff"/><rect x="1" y="2" width="1" height="12" fill="#d8d8d8"/><rect x="2" y="3" width="12" height="2" fill="#000080"/><rect x="8" y="4" width="1" height="1" fill="#fff"/><rect x="10" y="4" width="1" height="1" fill="#fff"/><rect x="12" y="4" width="1" height="1" fill="#fff"/><rect x="4" y="6" width="9" height="2" fill="#000"/><rect x="7" y="6" width="2" height="7" fill="#000"/></svg><svg style="left:323px;top:139px;" width="16" height="16" viewBox="0 0 16 16" shape-rendering="crispEdges"><g shape-rendering="auto" stroke="#ff0" stroke-width="1.1"><line x1="1" y1="1.5" x2="4.5" y2="5.5"/><line x1="3.8" y1="0" x2="4.6" y2="5"/><line x1="0" y1="5.6" x2="4.6" y2="5.6"/><line x1="0.6" y1="9.5" x2="4.6" y2="6.2"/></g><path shape-rendering="auto" d="M6.3,5 V3.8 Q6.3,1 9.3,1 Q12.3,1 12.3,3.8 V8" fill="none" stroke="#000" stroke-width="2.6"/><path shape-rendering="auto" d="M6.3,5 V3.8 Q6.3,1 9.3,1 Q12.3,1 12.3,3.8 V8" fill="none" stroke="#e8e8e8" stroke-width="0.9"/><rect shape-rendering="auto" x="3.5" y="8" width="12" height="7.6" rx="3.2" fill="#b4b4b4" stroke="#000" stroke-width="1.1"/><rect x="4" y="10" width="11" height="1" fill="#787878"/><rect x="4" y="12" width="11" height="1" fill="#787878"/><rect x="5" y="14" width="9" height="1" fill="#787878"/><rect x="8" y="9" width="3" height="2" fill="#000"/><rect x="9" y="11" width="1" height="3" fill="#000"/></svg><svg style="left:347px;top:139px;" width="16" height="16" viewBox="0 0 16 16" shape-rendering="crispEdges"><rect x="2" y="0" width="12" height="9" fill="#0ff"/><rect x="2" y="9" width="12" height="7" fill="#ff0"/><g shape-rendering="auto" stroke="#000" fill="none" stroke-linecap="round"><circle cx="9.5" cy="2.5" r="1.3" fill="#000" stroke="none"/><path d="M9,4.5 L7.5,9.5 L10.5,12 L11,15" stroke-width="1.6"/><path d="M7.5,9.5 L5.5,12 L3.5,14.5" stroke-width="1.6"/><path d="M8.8,5.5 L5.5,8 M8.8,5.5 L11.5,8.5 L13,8" stroke-width="1.2"/></g></svg><svg style="left:369.6px;top:138.5px;" width="16" height="16" viewBox="0 0 16 16" shape-rendering="crispEdges"><g shape-rendering="auto"><circle cx="8" cy="8" r="7.2" fill="#e8e8e8" stroke="#000" stroke-width="1.1"/><circle cx="8" cy="8" r="5.9" fill="#000"/><circle cx="8" cy="8" r="2.7" fill="#7c7c7c"/><circle cx="8" cy="8" r="1.5" fill="#8c8c8c"/></g></svg><div class="sep" style="left:392px;top:137px;width:2px;height:18px;"></div><span style="left:395px;top:138.0px;font-size:11px;line-height:15px;color:#000;letter-spacing:0.208px;font-weight:bold;">SCAN</span><div style="left:432px;top:135px;width:66px;height:21px;background:#e4e4e4;border:1px solid #c8c8c8;"><svg style="left:48px;top:5px" width="12" height="10" viewBox="0 0 12 10"><path d="M2 3 L6 7 L10 3" fill="none" stroke="#444" stroke-width="1.1"/></svg></div><div class="sep" style="left:500px;top:137px;width:2px;height:18px;"></div><span style="left:503px;top:138.0px;font-size:11px;line-height:15px;color:#000;letter-spacing:0.518px;font-weight:bold;">EMU</span><svg style="left:536.6px;top:138.5px;" width="16" height="16" viewBox="0 0 16 16" shape-rendering="crispEdges"><g shape-rendering="auto"><circle cx="8" cy="8" r="7.2" fill="#e8e8e8" stroke="#000" stroke-width="1.1"/><circle cx="8" cy="8" r="5.9" fill="#000"/><circle cx="8" cy="8" r="2.7" fill="#7c7c7c"/><circle cx="8" cy="8" r="1.5" fill="#8c8c8c"/></g></svg><div class="sep" style="left:559px;top:137px;width:2px;height:18px;"></div><span style="left:562px;top:138.0px;font-size:11px;line-height:15px;color:#000;letter-spacing:0.258px;font-weight:bold;">REC</span><svg style="left:593.4px;top:138.5px;" width="16" height="16" viewBox="0 0 16 16" shape-rendering="crispEdges"><g shape-rendering="auto"><circle cx="8" cy="8" r="7.2" fill="#e8e8e8" stroke="#000" stroke-width="1.1"/><circle cx="8" cy="8" r="5.9" fill="#000"/><circle cx="8" cy="8" r="2.7" fill="#7c7c7c"/><circle cx="8" cy="8" r="1.5" fill="#8c8c8c"/></g></svg><div style="left:116px;top:164px;width:130px;height:385px;background:#000;"></div><div style="left:116px;top:164px;width:49px;height:21px;background:#c0c0c0;border-right:1px solid #000;border-bottom:1px solid #000;"></div><div style="left:165px;top:164px;width:51px;height:21px;background:#c0c0c0;border-bottom:1px solid #000;border-right:1px solid #c0c0c0;"></div><span style="left:132.7px;top:164.0px;font-size:13px;line-height:17px;color:#0000f0;transform:scaleX(0.9276);transform-origin:left center;font-weight:bold;">RPM</span><span style="left:185.5px;top:163.5px;font-size:13px;line-height:17px;color:#0000f0;letter-spacing:0.670px;font-weight:bold;">--</span><div style="left:116px;top:185px;width:49px;height:19px;background:#c0c0c0;border-right:1px solid #000;border-bottom:1px solid #000;"></div><span style="left:137.2px;top:185.0px;font-size:13px;line-height:17px;color:#0000f0;transform:scaleX(1.0742);transform-origin:left center;font-weight:bold;">750</span><div style="left:165px;top:185px;width:51px;height:19px;background:#fff;border-right:1px solid #c8c8c8;border-bottom:1px solid #c8c8c8;"></div><span style="left:174.3px;top:185.0px;font-size:13px;line-height:17px;color:#000;transform:scaleX(0.9456);transform-origin:left center;">225,00</span><div style="left:116px;top:204px;width:49px;height:19px;background:#c0c0c0;border-right:1px solid #000;border-bottom:1px solid #000;"></div><span style="left:129.3px;top:204.0px;font-size:13px;line-height:17px;color:#0000f0;transform:scaleX(1.0788);transform-origin:left center;font-weight:bold;">1500</span><div style="left:165px;top:204px;width:51px;height:19px;background:#fff;border-right:1px solid #c8c8c8;border-bottom:1px solid #c8c8c8;"></div><span style="left:174.3px;top:204.0px;font-size:13px;line-height:17px;color:#000;transform:scaleX(0.9456);transform-origin:left center;">225,00</span><div style="left:116px;top:223px;width:49px;height:19px;background:#c0c0c0;border-right:1px solid #000;border-bottom:1px solid #000;"></div><span style="left:129.3px;top:223.0px;font-size:13px;line-height:17px;color:#0000f0;transform:scaleX(1.0788);transform-origin:left center;font-weight:bold;">1750</span><div style="left:165px;top:223px;width:51px;height:19px;background:#fff;border-right:1px solid #c8c8c8;border-bottom:1px solid #c8c8c8;"></div><span style="left:174.3px;top:223.0px;font-size:13px;line-height:17px;color:#000;transform:scaleX(0.9456);transform-origin:left center;">225,00</span><div style="left:116px;top:242px;width:49px;height:19px;background:#c0c0c0;border-right:1px solid #000;border-bottom:1px solid #000;"></div><span style="left:129.3px;top:242.0px;font-size:13px;line-height:17px;color:#0000f0;transform:scaleX(1.0788);transform-origin:left center;font-weight:bold;">1850</span><div style="left:165px;top:242px;width:51px;height:19px;background:#fff;border-right:1px solid #c8c8c8;border-bottom:1px solid #c8c8c8;"></div><span style="left:174.3px;top:242.0px;font-size:13px;line-height:17px;color:#000;transform:scaleX(0.9456);transform-origin:left center;">225,00</span><div style="left:116px;top:261px;width:49px;height:19px;background:#c0c0c0;border-right:1px solid #000;border-bottom:1px solid #000;"></div><span style="left:129.3px;top:261.0px;font-size:13px;line-height:17px;color:#0000f0;transform:scaleX(1.0788);transform-origin:left center;font-weight:bold;">2000</span><div style="left:165px;top:261px;width:51px;height:19px;background:#ff0000;border-right:1px solid #c8c8c8;border-bottom:1px solid #c8c8c8;"></div><span style="left:174.3px;top:261.0px;font-size:13px;line-height:17px;color:#fff;transform:scaleX(0.9456);transform-origin:left center;">226,00</span><div style="left:116px;top:280px;width:49px;height:19px;background:#c0c0c0;border-right:1px solid #000;border-bottom:1px solid #000;"></div><span style="left:129.3px;top:280.0px;font-size:13px;line-height:17px;color:#0000f0;transform:scaleX(1.0788);transform-origin:left center;font-weight:bold;">2500</span><div style="left:165px;top:280px;width:51px;height:19px;background:#ff0000;border-right:1px solid #c8c8c8;border-bottom:1px solid #c8c8c8;"></div><span style="left:174.3px;top:280.0px;font-size:13px;line-height:17px;color:#fff;transform:scaleX(0.9456);transform-origin:left center;">241,80</span><div style="left:116px;top:299px;width:49px;height:19px;background:#c0c0c0;border-right:1px solid #000;border-bottom:1px solid #000;"></div><span style="left:129.3px;top:299.0px;font-size:13px;line-height:17px;color:#0000f0;transform:scaleX(1.0788);transform-origin:left center;font-weight:bold;">3000</span><div style="left:165px;top:299px;width:51px;height:19px;background:#ff0000;border-right:1px solid #c8c8c8;border-bottom:1px solid #c8c8c8;"></div><span style="left:174.3px;top:299.0px;font-size:13px;line-height:17px;color:#fff;transform:scaleX(0.9456);transform-origin:left center;">263,67</span><div style="left:116px;top:318px;width:49px;height:19px;background:#c0c0c0;border-right:1px solid #000;border-bottom:1px solid #000;"></div><span style="left:129.3px;top:318.0px;font-size:13px;line-height:17px;color:#0000f0;transform:scaleX(1.0788);transform-origin:left center;font-weight:bold;">3500</span><div style="left:165px;top:318px;width:51px;height:19px;background:#808080;border-right:1px solid #c8c8c8;border-bottom:1px solid #c8c8c8;"></div><span style="left:174.3px;top:318.0px;font-size:13px;line-height:17px;color:#fff;transform:scaleX(0.9456);transform-origin:left center;">281,00</span><div style="left:116px;top:337px;width:49px;height:19px;background:#c0c0c0;border-right:1px solid #000;border-bottom:1px solid #000;"></div><span style="left:129.3px;top:337.0px;font-size:13px;line-height:17px;color:#0000f0;transform:scaleX(1.0788);transform-origin:left center;font-weight:bold;">4000</span><div style="left:165px;top:337px;width:51px;height:19px;background:#808080;border-right:1px solid #c8c8c8;border-bottom:1px solid #c8c8c8;"></div><span style="left:174.3px;top:337.0px;font-size:13px;line-height:17px;color:#fff;transform:scaleX(0.9456);transform-origin:left center;">283,00</span><div style="left:116px;top:356px;width:49px;height:19px;background:#c0c0c0;border-right:1px solid #000;border-bottom:1px solid #000;"></div><span style="left:129.3px;top:356.0px;font-size:13px;line-height:17px;color:#0000f0;transform:scaleX(1.0788);transform-origin:left center;font-weight:bold;">4500</span><div style="left:165px;top:356px;width:51px;height:19px;background:#ff0000;border-right:1px solid #c8c8c8;border-bottom:1px solid #c8c8c8;"></div><span style="left:174.3px;top:356.0px;font-size:13px;line-height:17px;color:#fff;transform:scaleX(0.9456);transform-origin:left center;">283,61</span><div style="left:116px;top:375px;width:49px;height:19px;background:#c0c0c0;border-right:1px solid #000;border-bottom:1px solid #000;"></div><span style="left:129.3px;top:375.0px;font-size:13px;line-height:17px;color:#0000f0;transform:scaleX(1.0788);transform-origin:left center;font-weight:bold;">4800</span><div style="left:165px;top:375px;width:51px;height:19px;background:#ff0000;border-right:1px solid #c8c8c8;border-bottom:1px solid #c8c8c8;"></div><span style="left:174.3px;top:375.0px;font-size:13px;line-height:17px;color:#fff;transform:scaleX(0.9456);transform-origin:left center;">284,40</span><div style="left:116px;top:394px;width:49px;height:19px;background:#c0c0c0;border-right:1px solid #000;border-bottom:1px solid #000;"></div><span style="left:129.3px;top:394.0px;font-size:13px;line-height:17px;color:#0000f0;transform:scaleX(1.0788);transform-origin:left center;font-weight:bold;">4918</span><div style="left:165px;top:394px;width:51px;height:19px;background:#ff0000;border-right:1px solid #c8c8c8;border-bottom:1px solid #c8c8c8;"></div><span style="left:174.3px;top:394.0px;font-size:13px;line-height:17px;color:#fff;transform:scaleX(0.9456);transform-origin:left center;">284,72</span><div style="left:116px;top:413px;width:49px;height:19px;background:#c0c0c0;border-right:1px solid #000;border-bottom:1px solid #000;"></div><span style="left:129.3px;top:413.0px;font-size:13px;line-height:17px;color:#0000f0;transform:scaleX(1.0788);transform-origin:left center;font-weight:bold;">5000</span><div style="left:165px;top:413px;width:51px;height:19px;background:#ff0000;border-right:1px solid #c8c8c8;border-bottom:1px solid #c8c8c8;"></div><span style="left:174.3px;top:413.0px;font-size:13px;line-height:17px;color:#fff;transform:scaleX(0.9456);transform-origin:left center;">283,94</span><div style="left:116px;top:432px;width:49px;height:19px;background:#c0c0c0;border-right:1px solid #000;border-bottom:1px solid #000;"></div><span style="left:129.3px;top:432.0px;font-size:13px;line-height:17px;color:#0000f0;transform:scaleX(1.0788);transform-origin:left center;font-weight:bold;">5500</span><div style="left:165px;top:432px;width:51px;height:19px;background:#ff0000;border-right:1px solid #c8c8c8;border-bottom:1px solid #c8c8c8;"></div><span style="left:174.3px;top:432.0px;font-size:13px;line-height:17px;color:#fff;transform:scaleX(0.9456);transform-origin:left center;">281,60</span><div style="left:116px;top:451px;width:49px;height:19px;background:#c0c0c0;border-right:1px solid #000;border-bottom:1px solid #000;"></div><span style="left:129.3px;top:451.0px;font-size:13px;line-height:17px;color:#0000f0;transform:scaleX(1.0788);transform-origin:left center;font-weight:bold;">6000</span><div style="left:165px;top:451px;width:51px;height:19px;background:#ff0000;border-right:1px solid #c8c8c8;border-bottom:1px solid #c8c8c8;"></div><span style="left:174.3px;top:451.0px;font-size:13px;line-height:17px;color:#fff;transform:scaleX(0.9456);transform-origin:left center;">272,00</span><div style="left:116px;top:470px;width:49px;height:19px;background:#c0c0c0;border-right:1px solid #000;border-bottom:1px solid #000;"></div><span style="left:129.3px;top:470.0px;font-size:13px;line-height:17px;color:#0000f0;transform:scaleX(1.0788);transform-origin:left center;font-weight:bold;">6500</span><div style="left:165px;top:470px;width:51px;height:19px;background:#00e800;border-right:1px solid #c8c8c8;border-bottom:1px solid #c8c8c8;"></div><span style="left:174.3px;top:470.0px;font-size:13px;line-height:17px;color:#000;transform:scaleX(0.9456);transform-origin:left center;">247,00</span><div style="left:114px;top:160px;width:529px;height:1px;background:#fbfbfb;"></div><div style="left:114px;top:161px;width:529px;height:1px;background:#a0a0a0;"></div><div style="left:115px;top:162px;width:133px;height:1px;background:#a0a0a0;"></div><div style="left:115px;top:163px;width:132px;height:1px;background:#fff;"></div><div style="left:115px;top:163px;width:1px;height:387px;background:#fff;"></div><div style="left:246px;top:163px;width:1px;height:460px;background:#fff;"></div><div style="left:247px;top:162px;width:2px;height:461px;background:#a0a0a0;"></div><div style="left:249px;top:162px;width:1px;height:461px;background:#000;"></div><div style="left:250px;top:162px;width:1px;height:461px;background:#909090;"></div><div style="left:251px;top:162px;width:1px;height:461px;background:#000;"></div><div style="left:252px;top:162px;width:1px;height:461px;background:#fff;"></div><div style="left:114px;top:549px;width:132px;height:74px;overflow:hidden;background:#f0f0f0;"><div style="left:0;top:0;width:400px;height:1px;background:#fff"></div><div style="left:0;top:72px;width:400px;height:1px;background:#dcdcdc"></div><div style="left:2px;top:8px;width:130px;height:1px;background:#dcdcdc;"></div><div style="left:2px;top:9px;width:130px;height:1px;background:#fff;"></div><div style="left:10px;top:2px;width:110px;height:12px;background:#f0f0f0;"></div><span style="left:12.5px;top:0.5px;font-size:12px;line-height:16px;color:#000;letter-spacing:-0.076px;font-weight:bold;">Données chargées</span><div class="edit" style="left:45px;top:24px;width:80px;height:21px;"><span style="left:3px;top:2.0px;font-size:11px;line-height:15px;color:#0000f0;letter-spacing:-0.248px;">28E0C990</span></div><span style="left:65px;top:9.5px;font-size:12px;line-height:16px;color:#000;letter-spacing:-0.057px;font-weight:bold;">32 bit</span><span style="left:35.5px;top:28.0px;font-size:12px;line-height:16px;color:#000;font-weight:bold;">er</span><div class="edit" style="left:-43px;top:24px;width:78px;height:21px;"><span style="left:0px;top:2.0px;font-size:11px;line-height:15px;color:#0000f0;letter-spacing:-0.081px;">ABDE9B29</span></div><span style="left:-22px;top:9.5px;font-size:12px;line-height:16px;color:#000;letter-spacing:-0.057px;font-weight:bold;">16 bit</span><div class="edit" style="left:-40px;top:50px;width:165px;height:21px;"><span style="left:2px;top:1.5px;font-size:12px;line-height:16px;color:#000;letter-spacing:-0.652px;">0AJ_C990.DRT</span></div></div><div style="left:253px;top:161px;width:390px;height:1px;background:#b4b4b4;"></div><div style="left:253px;top:162px;width:390px;height:197px;background:linear-gradient(#fffb84,#fffc98 30%,#fffdc6 70%,#fffffa);border-bottom:1px solid #d4d4d4;border-right:2px solid #d3cc9c;"></div><svg style="left:242px;top:158px" width="402" height="202" viewBox="242 158 402 202"><line x1="292.2" x2="632.8" y1="327.9" y2="327.9" stroke="#d6d4c2" stroke-width="1.4"/><line x1="292.2" x2="632.8" y1="313.4" y2="313.4" stroke="#d6d4c2" stroke-width="1.4"/><line x1="292.2" x2="632.8" y1="299.0" y2="299.0" stroke="#d6d4c2" stroke-width="1.4"/><line x1="292.2" x2="632.8" y1="284.5" y2="284.5" stroke="#d6d4c2" stroke-width="1.4"/><line x1="292.2" x2="632.8" y1="270.0" y2="270.0" stroke="#d6d4c2" stroke-width="1.4"/><line x1="292.2" x2="632.8" y1="255.6" y2="255.6" stroke="#d6d4c2" stroke-width="1.4"/><line x1="292.2" x2="632.8" y1="241.1" y2="241.1" stroke="#d6d4c2" stroke-width="1.4"/><line x1="292.2" x2="632.8" y1="226.6" y2="226.6" stroke="#d6d4c2" stroke-width="1.4"/><line x1="292.2" x2="632.8" y1="212.2" y2="212.2" stroke="#d6d4c2" stroke-width="1.4"/><line x1="292.2" x2="632.8" y1="197.7" y2="197.7" stroke="#d6d4c2" stroke-width="1.4"/><line y1="188.0" y2="338.4" x1="303.8" x2="303.8" stroke="#d6d4c2" stroke-width="1.4"/><line y1="188.0" y2="338.4" x1="346.0" x2="346.0" stroke="#d6d4c2" stroke-width="1.4"/><line y1="188.0" y2="338.4" x1="388.2" x2="388.2" stroke="#d6d4c2" stroke-width="1.4"/><line y1="188.0" y2="338.4" x1="430.4" x2="430.4" stroke="#d6d4c2" stroke-width="1.4"/><line y1="188.0" y2="338.4" x1="472.6" x2="472.6" stroke="#d6d4c2" stroke-width="1.4"/><line y1="188.0" y2="338.4" x1="514.8" x2="514.8" stroke="#d6d4c2" stroke-width="1.4"/><line y1="188.0" y2="338.4" x1="557.0" x2="557.0" stroke="#d6d4c2" stroke-width="1.4"/><line y1="188.0" y2="338.4" x1="599.2" x2="599.2" stroke="#d6d4c2" stroke-width="1.4"/><line y1="338.9" y2="341.4" x1="303.8" x2="303.8" stroke="#bebeb2" stroke-width="1.3"/><line y1="338.9" y2="341.4" x1="314.4" x2="314.4" stroke="#bebeb2" stroke-width="1.3"/><line y1="338.9" y2="341.4" x1="324.9" x2="324.9" stroke="#bebeb2" stroke-width="1.3"/><line y1="338.9" y2="341.4" x1="335.4" x2="335.4" stroke="#bebeb2" stroke-width="1.3"/><line y1="338.9" y2="341.4" x1="346.0" x2="346.0" stroke="#bebeb2" stroke-width="1.3"/><line y1="338.9" y2="341.4" x1="356.6" x2="356.6" stroke="#bebeb2" stroke-width="1.3"/><line y1="338.9" y2="341.4" x1="367.1" x2="367.1" stroke="#bebeb2" stroke-width="1.3"/><line y1="338.9" y2="341.4" x1="377.7" x2="377.7" stroke="#bebeb2" stroke-width="1.3"/><line y1="338.9" y2="341.4" x1="388.2" x2="388.2" stroke="#bebeb2" stroke-width="1.3"/><line y1="338.9" y2="341.4" x1="398.8" x2="398.8" stroke="#bebeb2" stroke-width="1.3"/><line y1="338.9" y2="341.4" x1="409.3" x2="409.3" stroke="#bebeb2" stroke-width="1.3"/><line y1="338.9" y2="341.4" x1="419.9" x2="419.9" stroke="#bebeb2" stroke-width="1.3"/><line y1="338.9" y2="341.4" x1="430.4" x2="430.4" stroke="#bebeb2" stroke-width="1.3"/><line y1="338.9" y2="341.4" x1="441.0" x2="441.0" stroke="#bebeb2" stroke-width="1.3"/><line y1="338.9" y2="341.4" x1="451.5" x2="451.5" stroke="#bebeb2" stroke-width="1.3"/><line y1="338.9" y2="341.4" x1="462.1" x2="462.1" stroke="#bebeb2" stroke-width="1.3"/><line y1="338.9" y2="341.4" x1="472.6" x2="472.6" stroke="#bebeb2" stroke-width="1.3"/><line y1="338.9" y2="341.4" x1="483.2" x2="483.2" stroke="#bebeb2" stroke-width="1.3"/><line y1="338.9" y2="341.4" x1="493.7" x2="493.7" stroke="#bebeb2" stroke-width="1.3"/><line y1="338.9" y2="341.4" x1="504.2" x2="504.2" stroke="#bebeb2" stroke-width="1.3"/><line y1="338.9" y2="341.4" x1="514.8" x2="514.8" stroke="#bebeb2" stroke-width="1.3"/><line y1="338.9" y2="341.4" x1="525.4" x2="525.4" stroke="#bebeb2" stroke-width="1.3"/><line y1="338.9" y2="341.4" x1="535.9" x2="535.9" stroke="#bebeb2" stroke-width="1.3"/><line y1="338.9" y2="341.4" x1="546.5" x2="546.5" stroke="#bebeb2" stroke-width="1.3"/><line y1="338.9" y2="341.4" x1="557.0" x2="557.0" stroke="#bebeb2" stroke-width="1.3"/><line y1="338.9" y2="341.4" x1="567.5" x2="567.5" stroke="#bebeb2" stroke-width="1.3"/><line y1="338.9" y2="341.4" x1="578.1" x2="578.1" stroke="#bebeb2" stroke-width="1.3"/><line y1="338.9" y2="341.4" x1="588.7" x2="588.7" stroke="#bebeb2" stroke-width="1.3"/><line y1="338.9" y2="341.4" x1="599.2" x2="599.2" stroke="#bebeb2" stroke-width="1.3"/><line y1="338.9" y2="341.4" x1="609.8" x2="609.8" stroke="#bebeb2" stroke-width="1.3"/><line y1="338.9" y2="341.4" x1="620.3" x2="620.3" stroke="#bebeb2" stroke-width="1.3"/><line x1="289.0" x2="291.0" y1="333.7" y2="333.7" stroke="#d2d2bc" stroke-width="0.9"/><line x1="289.0" x2="291.0" y1="330.8" y2="330.8" stroke="#d2d2bc" stroke-width="0.9"/><line x1="289.0" x2="291.0" y1="327.9" y2="327.9" stroke="#d2d2bc" stroke-width="0.9"/><line x1="289.0" x2="291.0" y1="325.0" y2="325.0" stroke="#d2d2bc" stroke-width="0.9"/><line x1="289.0" x2="291.0" y1="322.1" y2="322.1" stroke="#d2d2bc" stroke-width="0.9"/><line x1="289.0" x2="291.0" y1="319.2" y2="319.2" stroke="#d2d2bc" stroke-width="0.9"/><line x1="289.0" x2="291.0" y1="316.3" y2="316.3" stroke="#d2d2bc" stroke-width="0.9"/><line x1="289.0" x2="291.0" y1="313.4" y2="313.4" stroke="#d2d2bc" stroke-width="0.9"/><line x1="289.0" x2="291.0" y1="310.5" y2="310.5" stroke="#d2d2bc" stroke-width="0.9"/><line x1="289.0" x2="291.0" y1="307.6" y2="307.6" stroke="#d2d2bc" stroke-width="0.9"/><line x1="289.0" x2="291.0" y1="304.8" y2="304.8" stroke="#d2d2bc" stroke-width="0.9"/><line x1="289.0" x2="291.0" y1="301.9" y2="301.9" stroke="#d2d2bc" stroke-width="0.9"/><line x1="289.0" x2="291.0" y1="299.0" y2="299.0" stroke="#d2d2bc" stroke-width="0.9"/><line x1="289.0" x2="291.0" y1="296.1" y2="296.1" stroke="#d2d2bc" stroke-width="0.9"/><line x1="289.0" x2="291.0" y1="293.2" y2="293.2" stroke="#d2d2bc" stroke-width="0.9"/><line x1="289.0" x2="291.0" y1="290.3" y2="290.3" stroke="#d2d2bc" stroke-width="0.9"/><line x1="289.0" x2="291.0" y1="287.4" y2="287.4" stroke="#d2d2bc" stroke-width="0.9"/><line x1="289.0" x2="291.0" y1="284.5" y2="284.5" stroke="#d2d2bc" stroke-width="0.9"/><line x1="289.0" x2="291.0" y1="281.6" y2="281.6" stroke="#d2d2bc" stroke-width="0.9"/><line x1="289.0" x2="291.0" y1="278.7" y2="278.7" stroke="#d2d2bc" stroke-width="0.9"/><line x1="289.0" x2="291.0" y1="275.8" y2="275.8" stroke="#d2d2bc" stroke-width="0.9"/><line x1="289.0" x2="291.0" y1="272.9" y2="272.9" stroke="#d2d2bc" stroke-width="0.9"/><line x1="289.0" x2="291.0" y1="270.0" y2="270.0" stroke="#d2d2bc" stroke-width="0.9"/><line x1="289.0" x2="291.0" y1="267.1" y2="267.1" stroke="#d2d2bc" stroke-width="0.9"/><line x1="289.0" x2="291.0" y1="264.2" y2="264.2" stroke="#d2d2bc" stroke-width="0.9"/><line x1="289.0" x2="291.0" y1="261.4" y2="261.4" stroke="#d2d2bc" stroke-width="0.9"/><line x1="289.0" x2="291.0" y1="258.5" y2="258.5" stroke="#d2d2bc" stroke-width="0.9"/><line x1="289.0" x2="291.0" y1="255.6" y2="255.6" stroke="#d2d2bc" stroke-width="0.9"/><line x1="289.0" x2="291.0" y1="252.7" y2="252.7" stroke="#d2d2bc" stroke-width="0.9"/><line x1="289.0" x2="291.0" y1="249.8" y2="249.8" stroke="#d2d2bc" stroke-width="0.9"/><line x1="289.0" x2="291.0" y1="246.9" y2="246.9" stroke="#d2d2bc" stroke-width="0.9"/><line x1="289.0" x2="291.0" y1="244.0" y2="244.0" stroke="#d2d2bc" stroke-width="0.9"/><line x1="289.0" x2="291.0" y1="241.1" y2="241.1" stroke="#d2d2bc" stroke-width="0.9"/><line x1="289.0" x2="291.0" y1="238.2" y2="238.2" stroke="#d2d2bc" stroke-width="0.9"/><line x1="289.0" x2="291.0" y1="235.3" y2="235.3" stroke="#d2d2bc" stroke-width="0.9"/><line x1="289.0" x2="291.0" y1="232.4" y2="232.4" stroke="#d2d2bc" stroke-width="0.9"/><line x1="289.0" x2="291.0" y1="229.5" y2="229.5" stroke="#d2d2bc" stroke-width="0.9"/><line x1="289.0" x2="291.0" y1="226.6" y2="226.6" stroke="#d2d2bc" stroke-width="0.9"/><line x1="289.0" x2="291.0" y1="223.7" y2="223.7" stroke="#d2d2bc" stroke-width="0.9"/><line x1="289.0" x2="291.0" y1="220.8" y2="220.8" stroke="#d2d2bc" stroke-width="0.9"/><line x1="289.0" x2="291.0" y1="218.0" y2="218.0" stroke="#d2d2bc" stroke-width="0.9"/><line x1="289.0" x2="291.0" y1="215.1" y2="215.1" stroke="#d2d2bc" stroke-width="0.9"/><line x1="289.0" x2="291.0" y1="212.2" y2="212.2" stroke="#d2d2bc" stroke-width="0.9"/><line x1="289.0" x2="291.0" y1="209.3" y2="209.3" stroke="#d2d2bc" stroke-width="0.9"/><line x1="289.0" x2="291.0" y1="206.4" y2="206.4" stroke="#d2d2bc" stroke-width="0.9"/><line x1="289.0" x2="291.0" y1="203.5" y2="203.5" stroke="#d2d2bc" stroke-width="0.9"/><line x1="289.0" x2="291.0" y1="200.6" y2="200.6" stroke="#d2d2bc" stroke-width="0.9"/><line x1="289.0" x2="291.0" y1="197.7" y2="197.7" stroke="#d2d2bc" stroke-width="0.9"/><line x1="289.0" x2="291.0" y1="194.8" y2="194.8" stroke="#d2d2bc" stroke-width="0.9"/><line x1="289.0" x2="291.0" y1="191.9" y2="191.9" stroke="#d2d2bc" stroke-width="0.9"/><line x1="289.0" x2="291.0" y1="189.0" y2="189.0" stroke="#d2d2bc" stroke-width="0.9"/><polyline points="303.8,277.8 324.9,277.8 346.0,277.8 367.1,277.8 388.2,333.5 409.3,303.1 430.4,293.0 451.5,297.3 472.6,289.8 493.7,280.7 514.8,276.9 535.9,278.8 557.0,280.7 578.1,309.9 599.2,331.9 620.3,331.9" fill="none" stroke="#3434f4" stroke-width="1.15"/><polyline points="303.8,277.8 324.9,277.8 346.0,277.8 367.1,277.8 388.2,276.3 409.3,253.5 430.4,221.8 451.5,196.8 472.6,193.9 493.7,193.0 514.8,191.8 535.9,191.4 557.0,192.5 578.1,195.9 599.2,209.8 620.3,245.9" fill="none" stroke="#f4301c" stroke-width="1.15"/><line x1="303.8" x2="367.1" y1="277.8" y2="277.8" stroke="#b8206a" stroke-width="1.9"/><rect x="617.8" y="188.0" width="4.4" height="150.39999999999998" fill="#409a10"/><rect x="619.0" y="189.0" width="2.0" height="149.39999999999998" fill="#f08200"/><rect x="293.09999999999997" y="188.9" width="338.79999999999995" height="148.59999999999997" fill="none" stroke="#66643c" stroke-width="1.7"/></svg><span style="left:270.9px;top:322.0px;font-size:11px;line-height:15px;color:#000;letter-spacing:-0.284px;">190</span><span style="left:270.9px;top:307.0px;font-size:11px;line-height:15px;color:#000;letter-spacing:-0.284px;">200</span><span style="left:270.9px;top:293.0px;font-size:11px;line-height:15px;color:#000;letter-spacing:-0.284px;">210</span><span style="left:270.9px;top:279.0px;font-size:11px;line-height:15px;color:#000;letter-spacing:-0.284px;">220</span><span style="left:270.9px;top:264.0px;font-size:11px;line-height:15px;color:#000;letter-spacing:-0.284px;">230</span><span style="left:270.9px;top:250.0px;font-size:11px;line-height:15px;color:#000;letter-spacing:-0.284px;">240</span><span style="left:270.9px;top:235.0px;font-size:11px;line-height:15px;color:#000;letter-spacing:-0.284px;">250</span><span style="left:270.9px;top:221.0px;font-size:11px;line-height:15px;color:#000;letter-spacing:-0.284px;">260</span><span style="left:270.9px;top:206.0px;font-size:11px;line-height:15px;color:#000;letter-spacing:-0.284px;">270</span><span style="left:270.9px;top:192.0px;font-size:11px;line-height:15px;color:#000;letter-spacing:-0.284px;">280</span><span style="left:301.8px;top:340.4px;font-size:11px;line-height:15px;color:#000;letter-spacing:-0.117px;">0</span><span style="left:344.0px;top:340.4px;font-size:11px;line-height:15px;color:#000;letter-spacing:-0.117px;">2</span><span style="left:386.20000000000005px;top:340.4px;font-size:11px;line-height:15px;color:#000;letter-spacing:-0.117px;">4</span><span style="left:428.40000000000003px;top:340.4px;font-size:11px;line-height:15px;color:#000;letter-spacing:-0.117px;">6</span><span style="left:470.6px;top:340.4px;font-size:11px;line-height:15px;color:#000;letter-spacing:-0.117px;">8</span><span style="left:509.79999999999995px;top:340.4px;font-size:11px;line-height:15px;color:#000;letter-spacing:-0.117px;">10</span><span style="left:552.0px;top:340.4px;font-size:11px;line-height:15px;color:#000;letter-spacing:-0.117px;">12</span><span style="left:594.2px;top:340.4px;font-size:11px;line-height:15px;color:#000;letter-spacing:-0.117px;">14</span><span style="left:436.5px;top:169.5px;font-size:11px;line-height:15px;color:#2020e8;letter-spacing:-0.135px;">C = --</span><div style="left:253px;top:561px;width:390px;height:1px;background:#fff;"></div><div style="left:253px;top:622px;width:390px;height:1px;background:#fff;"></div><svg style="left:257px;top:571px" width="14" height="14" viewBox="0 0 14 14"><circle cx="7" cy="7" r="6" fill="#fff" stroke="#333" stroke-width="1"/></svg><svg style="left:257px;top:587px" width="14" height="14" viewBox="0 0 14 14"><circle cx="7" cy="7" r="6" fill="#fff" stroke="#333" stroke-width="1"/></svg><svg style="left:257px;top:603px" width="14" height="14" viewBox="0 0 14 14"><circle cx="7" cy="7" r="6" fill="#fff" stroke="#333" stroke-width="1"/><circle cx="7" cy="7" r="3.2" fill="#222"/></svg><span style="left:273px;top:570.5px;font-size:11px;line-height:15px;color:#000;letter-spacing:-0.041px;">Extrémités du driver</span><span style="left:273px;top:586.5px;font-size:11px;line-height:15px;color:#000;letter-spacing:-0.118px;">Extrémités linge/colonne</span><span style="left:273px;top:602.5px;font-size:11px;line-height:15px;color:#000;letter-spacing:-0.054px;">Extremités table</span><div style="left:113px;top:623px;width:530px;height:17px;background:#f0f0f0;"></div><div style="left:113px;top:623px;width:530px;height:1px;background:#fafafa;"></div><div style="left:378px;top:625px;width:1px;height:14px;background:#d7d7d7;"></div><div style="left:430px;top:625px;width:1px;height:14px;background:#d7d7d7;"></div><div style="left:482px;top:625px;width:1px;height:14px;background:#d7d7d7;"></div><div style="left:534px;top:625px;width:1px;height:14px;background:#d7d7d7;"></div><div style="left:586px;top:625px;width:1px;height:14px;background:#d7d7d7;"></div><span style="left:435px;top:625.0px;font-size:12px;line-height:16px;color:#000;letter-spacing:-0.442px;">K = 1,00</span><div style="left:483px;top:624px;width:50px;height:16px;overflow:hidden;"><span style="left:4px;top:1.0px;font-size:12px;line-height:16px;color:#000;letter-spacing:-0.518px;">Taille 16x1</span></div><span style="left:539px;top:625.0px;font-size:12px;line-height:16px;color:#000;letter-spacing:-0.442px;">K = 1,00</span><div style="left:587px;top:624px;width:41px;height:16px;overflow:hidden;"><span style="left:4px;top:1.0px;font-size:12px;line-height:16px;color:#000;letter-spacing:-0.085px;">Checksum</span></div><svg style="left:631px;top:628px" width="11" height="11" viewBox="0 0 11 11" shape-rendering="crispEdges" fill="#bfbfbf"><rect x="8" y="2" width="2" height="2"/><rect x="5" y="5" width="2" height="2"/><rect x="8" y="5" width="2" height="2"/><rect x="2" y="8" width="2" height="2"/><rect x="5" y="8" width="2" height="2"/><rect x="8" y="8" width="2" height="2"/></svg></div></div>
</body></html>
